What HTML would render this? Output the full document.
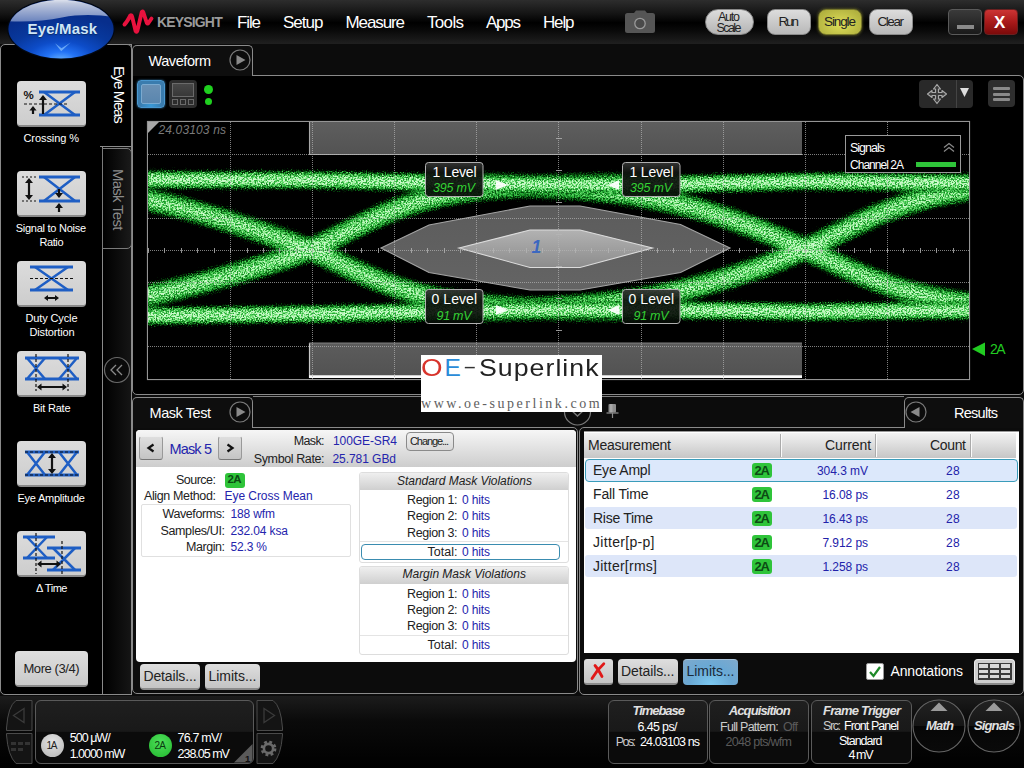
<!DOCTYPE html>
<html><head><meta charset="utf-8"><title>Eye/Mask</title>
<style>
html,body{margin:0;padding:0}
body{width:1024px;height:768px;position:relative;overflow:hidden;background:#0c0c0c;font-family:'Liberation Sans',sans-serif}
.t{position:absolute;white-space:pre;line-height:1;}
.a{position:absolute;box-sizing:border-box}
.btn{position:absolute;box-sizing:border-box;border-radius:4px;background:linear-gradient(#dedede,#c4c4c4);border:1px solid #999;border-top-color:#eee;border-bottom-color:#777}
.ib{position:absolute;box-sizing:border-box;width:69px;height:46px;left:17px;border-radius:4px;background:linear-gradient(#dcdcdc,#cdcdcd);border-bottom:2px solid #8a8a8a}
.badge{position:absolute;box-sizing:border-box;width:20px;height:15px;border-radius:3px;background:#2fc43a}
.row{position:absolute;box-sizing:border-box;left:585px;width:432px;height:22px;border-radius:3px;background:#dde6f9}
.grp{position:absolute;box-sizing:border-box;left:359px;width:210px;border:1px solid #ddd;border-radius:3px;background:#fff}
.gh{position:absolute;box-sizing:border-box;left:0;top:0;width:208px;height:17px;background:linear-gradient(#efefef,#cfcfcf);border-radius:2px 2px 0 0}
.bb{position:absolute;box-sizing:border-box;top:700px;height:64px;border:1px solid #5a5a5a;border-radius:6px;background:linear-gradient(#1f1f1f 0,#191919 49%,#0b0b0b 50%,#0b0b0b 100%)}
</style></head>
<body>
<div class="a" style="left:0;top:0;width:1024px;height:44px;background:linear-gradient(#2d2d2d 0,#151515 30%,#000 52%,#0a0a0a 70%,#202020 100%)"></div>
<div class="a" style="left:0;top:44px;width:103px;height:651px;border:1px solid #8a8a8a;border-radius:5px 0 0 5px;background:#000"></div>
<div class="a" style="left:102px;top:44px;width:30px;height:651px;border:1px solid #8a8a8a;background:linear-gradient(to right,#000,#151515)"></div>
<div class="a" style="left:100px;top:44px;width:32px;height:103px;border:1px solid #8a8a8a;border-left:none;border-radius:0 5px 0 0;background:#000"></div>
<div class="a" style="left:102px;top:148px;width:30px;height:101px;border:1px solid #7a7a7a;border-radius:0 5px 5px 0;background:linear-gradient(to right,#000,#1a1a1a)"></div>
<svg class="a" style="left:102px;top:355px" width="30" height="30"><circle cx="15" cy="15" r="12.5" fill="#0a0a0a" stroke="#6a6a6a" stroke-width="1.2"/><path d="M14,10 L9,15 L14,20 M20,10 L15,15 L20,20" fill="none" stroke="#8a8a8a" stroke-width="1.3"/></svg>
<div class="ib" style="top:81px"><svg width="69" height="46" style="position:absolute;left:0;top:0"><path d="M22,11 H63 M22,34 H63" stroke="#1e5ec4" stroke-width="3" fill="none"/><path d="M27,11 L58,34 M27,34 L58,11" stroke="#1e5ec4" stroke-width="2.5" fill="none"/><path d="M7,23 H52" stroke="#111" stroke-width="1.2" stroke-dasharray="3 2"/><path d="M26,16 V33" stroke="#111" stroke-width="2.2"/><path d="M22,19 L26,14 L30,19 Z" fill="#111"/><path d="M16,27 V33" stroke="#111" stroke-width="2.2"/><path d="M12.4,29.6 L16,25 L19.6,29.6 Z" fill="#111"/></svg></div>
<div class="ib" style="top:171px"><svg width="69" height="46" style="position:absolute;left:0;top:0"><path d="M22,6 H63 M22,30 H63" stroke="#1e5ec4" stroke-width="3" fill="none"/><path d="M27,6 L58,30 M27,30 L58,6" stroke="#1e5ec4" stroke-width="2.5" fill="none"/><path d="M5,6 H20 M5,30 H20" stroke="#111" stroke-width="1.2" stroke-dasharray="2 2"/><path d="M12,9 V27" stroke="#111" stroke-width="2.2"/><path d="M8,12 L12,7 L16,12 Z M8,24 L12,29 L16,24 Z" fill="#111"/><path d="M42,25 V18" stroke="#111" stroke-width="2.2"/><path d="M38,22 L42,27 L46,22 Z" fill="#111"/><path d="M42,34 V41" stroke="#111" stroke-width="2.2"/><path d="M38,37 L42,32 L46,37 Z" fill="#111"/></svg></div>
<div class="ib" style="top:261px"><svg width="69" height="46" style="position:absolute;left:0;top:0"><path d="M13,6 H56 M13,29 H56" stroke="#1e5ec4" stroke-width="3" fill="none"/><path d="M18,6 L51,29 M18,29 L51,6" stroke="#1e5ec4" stroke-width="2.5" fill="none"/><path d="M13,17.5 H57" stroke="#111" stroke-width="1.2" stroke-dasharray="3 2"/><path d="M29,37 H40" stroke="#111" stroke-width="2"/><path d="M31,34 L27,37 L31,40 Z M38,34 L42,37 L38,40 Z" fill="#111"/></svg></div>
<div class="ib" style="top:351px"><svg width="69" height="46" style="position:absolute;left:0;top:0"><path d="M8,7 H62 M8,28 H62" stroke="#1e5ec4" stroke-width="3"/><path d="M10,7 L28,28 M10,28 L28,7 M42,7 L60,28 M42,28 L60,7" stroke="#1e5ec4" stroke-width="2.5" fill="none"/><path d="M19,3 V40 M51,3 V40" stroke="#111" stroke-width="1.2" stroke-dasharray="3 2"/><path d="M22,36 H48" stroke="#111" stroke-width="2"/><path d="M24.5,32.5 L20,36 L24.5,39.5 Z M45.5,32.5 L50,36 L45.5,39.5 Z" fill="#111"/></svg></div>
<div class="ib" style="top:441px"><svg width="69" height="46" style="position:absolute;left:0;top:0"><path d="M8,11 H62 M8,34 H62" stroke="#1e5ec4" stroke-width="3"/><path d="M10,11 L28,34 M10,34 L28,11 M42,11 L60,34 M42,34 L60,11" stroke="#1e5ec4" stroke-width="2.5" fill="none"/><path d="M8,11 H62 M8,34 H62" stroke="#111" stroke-width="1" stroke-dasharray="3 2"/><path d="M35,14 V31" stroke="#111" stroke-width="2.2"/><path d="M31,17 L35,12 L39,17 Z M31,28 L35,33 L39,28 Z" fill="#111"/></svg></div>
<div class="ib" style="top:531px"><svg width="69" height="46" style="position:absolute;left:0;top:0"><path d="M6,6 H38 M6,27 H38 M30,17 H64 M30,39 H64" stroke="#1e5ec4" stroke-width="3"/><path d="M10,6 L30,27 M10,27 L30,6 M36,17 L58,39 M36,39 L58,17" stroke="#1e5ec4" stroke-width="2.5" fill="none"/><path d="M19,2 V43 M45,10 V43" stroke="#111" stroke-width="1.2" stroke-dasharray="3 2"/><path d="M22,33 H42" stroke="#111" stroke-width="2"/><path d="M24.5,29.5 L20,33 L24.5,36.5 Z M39.5,29.5 L44,33 L39.5,36.5 Z" fill="#111"/></svg></div>
<div class="btn" style="left:15px;top:651px;width:73px;height:36px;border-radius:4px;background:linear-gradient(#dedede,#cacaca);border:none;border-bottom:2px solid #8a8a8a"></div>
<svg class="a" style="left:0;top:0" width="130" height="64">
<defs>
<radialGradient id="eg" cx="50%" cy="104%" r="78%"><stop offset="0" stop-color="#6ab4ff"/><stop offset="0.2" stop-color="#2272f6"/><stop offset="0.42" stop-color="#0d4cc8"/><stop offset="0.7" stop-color="#08389c"/><stop offset="1" stop-color="#072e8c"/></radialGradient>
<linearGradient id="eh" x1="0" y1="0" x2="0" y2="1"><stop offset="0" stop-color="#ffffff" stop-opacity="1"/><stop offset="0.3" stop-color="#c4cce0" stop-opacity=".97"/><stop offset="1" stop-color="#7088c0" stop-opacity=".95"/></linearGradient>
<clipPath id="ec"><ellipse cx="61" cy="29" rx="52.4" ry="29.2"/></clipPath>
</defs>
<ellipse cx="61" cy="29" rx="53.8" ry="30.6" fill="#020814"/>
<ellipse cx="61" cy="29" rx="52.6" ry="29.4" fill="url(#eg)"/>
<path d="M5,21 C25,22.5 45,21 62,17.5 C80,14 98,14.5 116,17.5 V-4 H5 Z" fill="url(#eh)" clip-path="url(#ec)"/>
<path d="M55,43.2 L61.2,51.2 L70.6,42.4 L61.5,48.2 Z" fill="#8cc4ff" opacity=".7"/>
</svg>
<svg class="a" style="left:118px;top:4px" width="40" height="36"><path d="M6.5,20.5 Q9,18 12.3,11.5 Q13.5,10.5 14.2,13 L17.6,27 Q18.5,29 19.4,26.5 L23.8,8 Q24.6,6.5 25.4,8.5 L28.8,19 Q29.8,20.5 30.8,18.5 L33.5,14.5" fill="none" stroke="#e8123e" stroke-width="3.9" stroke-linecap="round" stroke-linejoin="round"/></svg>
<svg class="a" style="left:624px;top:9px" width="33" height="26"><path d="M10,4 L12,1.5 H21 L23,4 H28.5 Q31,4 31,6.5 V21.5 Q31,24 28.5,24 H3.5 Q1,24 1,21.5 V6.5 Q1,4 3.5,4 Z" fill="#555"/><circle cx="16" cy="14.5" r="5.2" fill="#4a4a4a" stroke="#9a9a9a" stroke-width="1.3"/></svg>
<div class="a" style="left:705px;top:9px;width:49px;height:26px;border-radius:13px;background:linear-gradient(#dcdcdc,#b4b4b4);border:1px solid #8a8a8a"></div>
<div class="a" style="left:767px;top:9px;width:44px;height:26px;border-radius:8px;background:linear-gradient(#dcdcdc,#b8b8b8);border:1px solid #8a8a8a"></div>
<div class="a" style="left:818px;top:9px;width:44px;height:26px;border-radius:8px;background:radial-gradient(ellipse at 50% 60%,#dede58,#a8a83a);border:1px solid #77772a;box-shadow:0 0 3px #77772a"></div>
<div class="a" style="left:869px;top:9px;width:44px;height:26px;border-radius:8px;background:linear-gradient(#dcdcdc,#b8b8b8);border:1px solid #8a8a8a"></div>
<div class="a" style="left:948px;top:9px;width:34px;height:26px;border-radius:4px;background:linear-gradient(#3a3a3a,#1a1a1a);border:1px solid #5a5a5a"></div>
<div class="a" style="left:957px;top:25px;width:17px;height:4px;background:#8a8a8a"></div>
<div class="a" style="left:984px;top:9px;width:34px;height:26px;border-radius:4px;background:linear-gradient(#cc3434 0,#a81a1a 50%,#7c0a0a 100%);border:1px solid #6a2020"></div>
<div class="a" style="left:132px;top:75px;width:892px;height:320px;border:1px solid #8a8a8a;border-radius:0 5px 5px 5px;background:#000"></div>
<div class="a" style="left:132px;top:45px;width:121px;height:31px;border:1px solid #8a8a8a;border-bottom:none;border-radius:5px 5px 0 0;background:#0e0e0e"></div>
<svg class="a" style="left:228px;top:48px" width="24" height="24"><circle cx="12" cy="12" r="10" fill="#0c0c0c" stroke="#7a7a7a" stroke-width="1.2"/><path d="M-3.5,-5 L5.5,0 L-3.5,5 Z" transform="translate(12,12)" fill="#8a8a8a"/></svg>
<div class="a" style="left:137px;top:80px;width:28px;height:28px;border-radius:4px;background:radial-gradient(ellipse at 50% 100%,#3a9ad8,#3a7cae 60%);border:1px solid #4a98d0;box-shadow:0 0 2px #3a88c0"><div class="a" style="left:3px;top:3px;width:20px;height:20px;border-radius:2px;border:1px solid #7aaad0;background:linear-gradient(#6a90b4,#5a86ae)"></div></div>
<div class="a" style="left:169px;top:80px;width:28px;height:28px;border-radius:4px;background:#2c2c2c"><div class="a" style="left:3px;top:3px;width:22px;height:14px;border:1px solid #6a6a6a;background:linear-gradient(#484848,#383838)"></div><div class="a" style="left:3px;top:19px;width:6px;height:6px;border:1px solid #6a6a6a"></div><div class="a" style="left:11px;top:19px;width:6px;height:6px;border:1px solid #6a6a6a"></div><div class="a" style="left:19px;top:19px;width:6px;height:6px;border:1px solid #6a6a6a"></div></div>
<div class="a" style="left:204px;top:84.5px;width:9px;height:9px;border-radius:50%;background:#1fd01f"></div>
<div class="a" style="left:205px;top:97.5px;width:7px;height:7px;border-radius:50%;background:#1fd01f"></div>
<div class="a" style="left:919px;top:80px;width:54px;height:28px;border-radius:4px;background:#292929"></div><div class="a" style="left:956px;top:80px;width:1px;height:28px;background:#444"></div>
<svg class="a" style="left:926px;top:83px" width="22" height="22"><path d="M11,1.5 L14.5,6 H12.5 V9.5 H16 V7.5 L20.5,11 L16,14.5 V12.5 H12.5 V16 H14.5 L11,20.5 L7.5,16 H9.5 V12.5 H6 V14.5 L1.5,11 L6,7.5 V9.5 H9.5 V6 H7.5 Z" fill="#3a3a3a" stroke="#a8a8a8" stroke-width="1.2" stroke-linejoin="round"/></svg>
<svg class="a" style="left:959px;top:87px" width="11" height="11"><path d="M1,1 H10 L5.5,10 Z" fill="#ddd"/></svg>
<div class="a" style="left:988px;top:80px;width:27px;height:27px;border-radius:4px;background:#2e2e2e"></div>
<div class="a" style="left:993px;top:87px;width:17px;height:3px;border-radius:1px;background:#8a8a8a"></div>
<div class="a" style="left:993px;top:92.5px;width:17px;height:3px;border-radius:1px;background:#8a8a8a"></div>
<div class="a" style="left:993px;top:98px;width:17px;height:3px;border-radius:1px;background:#8a8a8a"></div>
<svg class="a" style="left:133px;top:76px" width="888" height="318" viewBox="133 76 888 318">
<defs>
<clipPath id="pc"><rect x="148" y="122" width="821" height="257"/></clipPath>
<linearGradient id="lb" x1="0" y1="0" x2="0" y2="1"><stop offset="0" stop-color="#363636" stop-opacity=".94"/><stop offset="0.3" stop-color="#101410" stop-opacity=".93"/><stop offset="1" stop-color="#060c06" stop-opacity=".92"/></linearGradient>
<linearGradient id="mb" x1="0" y1="0" x2="0" y2="1"><stop offset="0" stop-color="#626262"/><stop offset="1" stop-color="#565656"/></linearGradient>
<linearGradient id="mb2" x1="0" y1="0" x2="0" y2="1"><stop offset="0" stop-color="#606060"/><stop offset="1" stop-color="#555"/></linearGradient>
<linearGradient id="mo" x1="0" y1="0" x2="0" y2="1"><stop offset="0" stop-color="#5c5c5c"/><stop offset="1" stop-color="#646464"/></linearGradient>
<linearGradient id="mi" x1="0" y1="0" x2="0" y2="1"><stop offset="0" stop-color="#b2b2b2"/><stop offset="1" stop-color="#8c8c8c"/></linearGradient>
<filter id="g1" x="140" y="115" width="840" height="272" filterUnits="userSpaceOnUse" color-interpolation-filters="sRGB">
  <feGaussianBlur in="SourceGraphic" stdDeviation="1.8" result="b"/>
  <feTurbulence type="fractalNoise" baseFrequency="0.62" numOctaves="2" seed="11" result="n"/>
  <feTurbulence type="fractalNoise" baseFrequency="0.8" numOctaves="1" seed="4" result="n2"/>
  <feDisplacementMap in="b" in2="n2" scale="9" xChannelSelector="R" yChannelSelector="G" result="bd"/>
  <feColorMatrix in="n" type="matrix" values="3 0 0 0 -1  3 0 0 0 -1  3 0 0 0 -1  0 0 0 0 1" result="na"/>
  <feComposite in="bd" in2="na" operator="arithmetic" k1="0.95" k2="0.6" k3="0" k4="-0.04" result="c"/>
  <feComponentTransfer in="c"><feFuncR type="table" tableValues="0 0.02 0.13 0.32 0.62 0.8"/><feFuncG type="table" tableValues="0 0.3 0.64 0.82 0.93 0.98"/><feFuncB type="table" tableValues="0 0.05 0.19 0.36 0.62 0.8"/></feComponentTransfer>
</filter>
</defs>
<rect x="147.8" y="121.8" width="821.4" height="257.4" fill="#000" stroke="#949494" stroke-width="1.8"/>
<g clip-path="url(#pc)">
 <g filter="url(#g1)" fill="none" stroke-linejoin="round">
  <rect x="140" y="115" width="840" height="272" fill="#000"/>
  <path d="M-21.0,307.9 L-15.0,307.7 L-9.0,307.4 L-3.0,307.2 L3.0,306.9 L9.0,306.6 L15.0,306.3 L21.0,306.0 L27.0,305.6 L33.0,305.2 L39.0,304.8 L45.0,304.4 L51.0,303.9 L57.0,303.4 L63.0,302.9 L69.0,302.3 L75.0,301.7 L81.0,301.0 L87.0,300.4 L93.0,299.6 L99.0,298.9 L105.0,303.6 L111.0,302.6 L117.0,301.6 L123.0,300.5 L129.0,299.4 L135.0,298.3 L141.0,297.1 L147.0,295.9 L153.0,294.6 L159.0,293.3 L165.0,292.0 L171.0,290.6 L177.0,289.1 L183.0,287.7 L189.0,286.2 L195.0,284.6 L201.0,283.1 L207.0,281.5 L213.0,279.9 L219.0,278.3 L225.0,276.6 L231.0,274.9 L237.0,273.2 L243.0,271.5 L249.0,269.8 L255.0,268.0 L261.0,266.2 L267.0,264.4 L273.0,262.5 L279.0,260.6 L285.0,258.6 L291.0,256.5 L297.0,254.3 L303.0,252.0 L309.0,249.5 L315.0,246.9 L321.0,244.3 L327.0,241.5 L333.0,238.6 L339.0,235.6 L345.0,232.6 L351.0,229.6 L357.0,226.6 L363.0,223.7 L369.0,220.8 L375.0,218.0 L381.0,215.4 L387.0,212.8 L393.0,210.4 L399.0,208.2 L405.0,206.0 L411.0,204.0 L417.0,202.2 L423.0,200.5 L429.0,198.9 L435.0,197.4 L441.0,196.1 L447.0,194.8 L453.0,193.7 L459.0,192.7 L465.0,191.7 L471.0,190.9 L477.0,190.1 L483.0,189.4 L489.0,188.8 L495.0,188.3 L501.0,187.8 L507.0,187.4 L513.0,187.1 L519.0,186.8 L525.0,186.5 L531.0,186.3 L537.0,186.1 L543.0,186.0 L549.0,185.7 L555.0,185.6 L561.0,185.4 L567.0,185.3 L573.0,185.2 L579.0,185.0 L585.0,185.0 L591.0,184.9 L597.0,184.8 L603.0,184.8 L609.0,184.7 L615.0,184.7 L621.0,184.7 L627.0,184.6 L633.0,184.6 L639.0,184.6 M-21.0,185.1 L-15.0,185.3 L-9.0,185.6 L-3.0,185.8 L3.0,186.1 L9.0,186.4 L15.0,186.7 L21.0,187.0 L27.0,187.4 L33.0,187.8 L39.0,188.2 L45.0,188.6 L51.0,189.1 L57.0,189.6 L63.0,190.1 L69.0,190.7 L75.0,191.3 L81.0,192.0 L87.0,192.7 L93.0,193.4 L99.0,194.2 L105.0,192.4 L111.0,193.3 L117.0,194.3 L123.0,195.3 L129.0,196.4 L135.0,197.5 L141.0,198.7 L147.0,199.9 L153.0,201.1 L159.0,202.5 L165.0,203.8 L171.0,205.2 L177.0,206.7 L183.0,208.2 L189.0,209.8 L195.0,211.5 L201.0,213.1 L207.0,214.9 L213.0,216.6 L219.0,218.5 L225.0,220.3 L231.0,222.2 L237.0,224.1 L243.0,226.1 L249.0,228.0 L255.0,230.0 L261.0,232.0 L267.0,234.1 L273.0,236.1 L279.0,238.2 L285.0,240.3 L291.0,242.5 L297.0,244.8 L303.0,247.1 L309.0,249.5 L315.0,252.0 L321.0,254.7 L327.0,257.4 L333.0,260.2 L339.0,263.0 L345.0,265.8 L351.0,268.6 L357.0,271.3 L363.0,274.0 L369.0,276.6 L375.0,279.1 L381.0,281.5 L387.0,283.8 L393.0,285.9 L399.0,288.0 L405.0,289.9 L411.0,291.7 L417.0,293.4 L423.0,294.9 L429.0,296.4 L435.0,297.7 L441.0,299.0 L447.0,300.1 L453.0,301.2 L459.0,302.2 L465.0,303.0 L471.0,303.8 L477.0,304.5 L483.0,305.2 L489.0,305.8 L495.0,306.3 L501.0,306.7 L507.0,307.1 L513.0,307.5 L519.0,307.7 L525.0,308.0 L531.0,308.2 L537.0,308.4 L543.0,308.6 L549.0,308.8 L555.0,308.9 L561.0,309.1 L567.0,309.2 L573.0,309.3 L579.0,309.5 L585.0,309.5 L591.0,309.6 L597.0,309.7 L603.0,309.7 L609.0,309.8 L615.0,309.8 L621.0,309.8 L627.0,309.9 L633.0,309.9 L639.0,309.9 M475.0,310.6 L481.0,310.4 L487.0,310.2 L493.0,310.0 L499.0,309.8 L505.0,309.5 L511.0,309.3 L517.0,309.0 L523.0,308.8 L529.0,308.5 L535.0,308.2 L541.0,307.8 L547.0,307.6 L553.0,307.3 L559.0,306.9 L565.0,306.6 L571.0,306.2 L577.0,305.7 L583.0,305.3 L589.0,304.7 L595.0,304.2 L601.0,303.6 L607.0,302.9 L613.0,302.2 L619.0,301.5 L625.0,300.6 L631.0,299.8 L637.0,298.9 L643.0,297.9 L649.0,296.8 L655.0,295.8 L661.0,294.6 L667.0,293.4 L673.0,292.2 L679.0,290.9 L685.0,289.5 L691.0,288.0 L697.0,286.5 L703.0,285.0 L709.0,283.3 L715.0,281.6 L721.0,279.9 L727.0,278.1 L733.0,276.2 L739.0,274.3 L745.0,272.4 L751.0,270.3 L757.0,268.3 L763.0,266.1 L769.0,264.0 L775.0,261.7 L781.0,259.4 L787.0,257.0 L793.0,254.5 L799.0,251.9 L805.0,249.2 L811.0,246.5 L817.0,243.6 L823.0,240.7 L829.0,237.7 L835.0,234.7 L841.0,231.8 L847.0,228.8 L853.0,225.9 L859.0,223.0 L865.0,220.3 L871.0,217.6 L877.0,215.0 L883.0,212.5 L889.0,210.2 L895.0,207.9 L901.0,205.8 L907.0,203.8 L913.0,201.9 L919.0,200.2 L925.0,198.6 L931.0,197.0 L937.0,195.7 L943.0,194.4 L949.0,193.2 L955.0,192.1 L961.0,191.1 L967.0,190.2 L973.0,189.4 L979.0,188.7 L985.0,188.1 L991.0,187.5 L997.0,187.0 L1003.0,186.5 L1009.0,186.0 L1015.0,185.6 L1021.0,185.3 L1027.0,185.0 L1033.0,184.7 L1039.0,184.5 L1045.0,184.3 L1051.0,184.1 L1057.0,183.9 L1063.0,183.8 L1069.0,183.7 L1075.0,183.6 L1081.0,183.5 L1087.0,183.4 L1093.0,183.3 L1099.0,183.3 L1105.0,183.2 L1111.0,183.2 L1117.0,183.2 L1123.0,183.1 L1129.0,183.1 L1135.0,183.1 M475.0,183.9 L481.0,184.1 L487.0,184.3 L493.0,184.5 L499.0,184.7 L505.0,185.0 L511.0,185.2 L517.0,185.5 L523.0,185.7 L529.0,186.0 L535.0,186.4 L541.0,186.7 L547.0,186.9 L553.0,187.2 L559.0,187.6 L565.0,187.9 L571.0,188.3 L577.0,188.8 L583.0,189.3 L589.0,189.8 L595.0,190.3 L601.0,191.0 L607.0,191.6 L613.0,192.3 L619.0,193.1 L625.0,193.9 L631.0,194.8 L637.0,195.8 L643.0,196.8 L649.0,197.9 L655.0,199.0 L661.0,200.2 L667.0,201.4 L673.0,202.7 L679.0,204.1 L685.0,205.6 L691.0,207.1 L697.0,208.7 L703.0,210.5 L709.0,212.2 L715.0,214.1 L721.0,216.1 L727.0,218.1 L733.0,220.1 L739.0,222.3 L745.0,224.5 L751.0,226.7 L757.0,229.0 L763.0,231.4 L769.0,233.8 L775.0,236.2 L781.0,238.7 L787.0,241.3 L793.0,243.9 L799.0,246.5 L805.0,249.2 L811.0,252.0 L817.0,254.8 L823.0,257.6 L829.0,260.4 L835.0,263.2 L841.0,265.9 L847.0,268.6 L853.0,271.3 L859.0,273.8 L865.0,276.3 L871.0,278.7 L877.0,281.0 L883.0,283.1 L889.0,285.2 L895.0,287.2 L901.0,289.1 L907.0,290.8 L913.0,292.5 L919.0,294.0 L925.0,295.5 L931.0,296.8 L937.0,298.1 L943.0,299.3 L949.0,300.3 L955.0,301.3 L961.0,302.2 L967.0,303.0 L973.0,303.8 L979.0,304.5 L985.0,305.1 L991.0,305.6 L997.0,306.1 L1003.0,306.6 L1009.0,307.0 L1015.0,307.4 L1021.0,307.7 L1027.0,308.0 L1033.0,308.3 L1039.0,308.5 L1045.0,308.7 L1051.0,308.9 L1057.0,309.1 L1063.0,309.2 L1069.0,309.3 L1075.0,309.4 L1081.0,309.5 L1087.0,309.6 L1093.0,309.7 L1099.0,309.7 L1105.0,309.8 L1111.0,309.8 L1117.0,309.8 L1123.0,309.9 L1129.0,309.9 L1135.0,309.9" stroke="#3a3a3a" stroke-width="24"/>
  <path d="M-21.0,307.9 L-15.0,307.7 L-9.0,307.4 L-3.0,307.2 L3.0,306.9 L9.0,306.6 L15.0,306.3 L21.0,306.0 L27.0,305.6 L33.0,305.2 L39.0,304.8 L45.0,304.4 L51.0,303.9 L57.0,303.4 L63.0,302.9 L69.0,302.3 L75.0,301.7 L81.0,301.0 L87.0,300.4 L93.0,299.6 L99.0,298.9 L105.0,303.6 L111.0,302.6 L117.0,301.6 L123.0,300.5 L129.0,299.4 L135.0,298.3 L141.0,297.1 L147.0,295.9 L153.0,294.6 L159.0,293.3 L165.0,292.0 L171.0,290.6 L177.0,289.1 L183.0,287.7 L189.0,286.2 L195.0,284.6 L201.0,283.1 L207.0,281.5 L213.0,279.9 L219.0,278.3 L225.0,276.6 L231.0,274.9 L237.0,273.2 L243.0,271.5 L249.0,269.8 L255.0,268.0 L261.0,266.2 L267.0,264.4 L273.0,262.5 L279.0,260.6 L285.0,258.6 L291.0,256.5 L297.0,254.3 L303.0,252.0 L309.0,249.5 L315.0,246.9 L321.0,244.3 L327.0,241.5 L333.0,238.6 L339.0,235.6 L345.0,232.6 L351.0,229.6 L357.0,226.6 L363.0,223.7 L369.0,220.8 L375.0,218.0 L381.0,215.4 L387.0,212.8 L393.0,210.4 L399.0,208.2 L405.0,206.0 L411.0,204.0 L417.0,202.2 L423.0,200.5 L429.0,198.9 L435.0,197.4 L441.0,196.1 L447.0,194.8 L453.0,193.7 L459.0,192.7 L465.0,191.7 L471.0,190.9 L477.0,190.1 L483.0,189.4 L489.0,188.8 L495.0,188.3 L501.0,187.8 L507.0,187.4 L513.0,187.1 L519.0,186.8 L525.0,186.5 L531.0,186.3 L537.0,186.1 L543.0,186.0 L549.0,185.7 L555.0,185.6 L561.0,185.4 L567.0,185.3 L573.0,185.2 L579.0,185.0 L585.0,185.0 L591.0,184.9 L597.0,184.8 L603.0,184.8 L609.0,184.7 L615.0,184.7 L621.0,184.7 L627.0,184.6 L633.0,184.6 L639.0,184.6 M-21.0,185.1 L-15.0,185.3 L-9.0,185.6 L-3.0,185.8 L3.0,186.1 L9.0,186.4 L15.0,186.7 L21.0,187.0 L27.0,187.4 L33.0,187.8 L39.0,188.2 L45.0,188.6 L51.0,189.1 L57.0,189.6 L63.0,190.1 L69.0,190.7 L75.0,191.3 L81.0,192.0 L87.0,192.7 L93.0,193.4 L99.0,194.2 L105.0,192.4 L111.0,193.3 L117.0,194.3 L123.0,195.3 L129.0,196.4 L135.0,197.5 L141.0,198.7 L147.0,199.9 L153.0,201.1 L159.0,202.5 L165.0,203.8 L171.0,205.2 L177.0,206.7 L183.0,208.2 L189.0,209.8 L195.0,211.5 L201.0,213.1 L207.0,214.9 L213.0,216.6 L219.0,218.5 L225.0,220.3 L231.0,222.2 L237.0,224.1 L243.0,226.1 L249.0,228.0 L255.0,230.0 L261.0,232.0 L267.0,234.1 L273.0,236.1 L279.0,238.2 L285.0,240.3 L291.0,242.5 L297.0,244.8 L303.0,247.1 L309.0,249.5 L315.0,252.0 L321.0,254.7 L327.0,257.4 L333.0,260.2 L339.0,263.0 L345.0,265.8 L351.0,268.6 L357.0,271.3 L363.0,274.0 L369.0,276.6 L375.0,279.1 L381.0,281.5 L387.0,283.8 L393.0,285.9 L399.0,288.0 L405.0,289.9 L411.0,291.7 L417.0,293.4 L423.0,294.9 L429.0,296.4 L435.0,297.7 L441.0,299.0 L447.0,300.1 L453.0,301.2 L459.0,302.2 L465.0,303.0 L471.0,303.8 L477.0,304.5 L483.0,305.2 L489.0,305.8 L495.0,306.3 L501.0,306.7 L507.0,307.1 L513.0,307.5 L519.0,307.7 L525.0,308.0 L531.0,308.2 L537.0,308.4 L543.0,308.6 L549.0,308.8 L555.0,308.9 L561.0,309.1 L567.0,309.2 L573.0,309.3 L579.0,309.5 L585.0,309.5 L591.0,309.6 L597.0,309.7 L603.0,309.7 L609.0,309.8 L615.0,309.8 L621.0,309.8 L627.0,309.9 L633.0,309.9 L639.0,309.9 M475.0,310.6 L481.0,310.4 L487.0,310.2 L493.0,310.0 L499.0,309.8 L505.0,309.5 L511.0,309.3 L517.0,309.0 L523.0,308.8 L529.0,308.5 L535.0,308.2 L541.0,307.8 L547.0,307.6 L553.0,307.3 L559.0,306.9 L565.0,306.6 L571.0,306.2 L577.0,305.7 L583.0,305.3 L589.0,304.7 L595.0,304.2 L601.0,303.6 L607.0,302.9 L613.0,302.2 L619.0,301.5 L625.0,300.6 L631.0,299.8 L637.0,298.9 L643.0,297.9 L649.0,296.8 L655.0,295.8 L661.0,294.6 L667.0,293.4 L673.0,292.2 L679.0,290.9 L685.0,289.5 L691.0,288.0 L697.0,286.5 L703.0,285.0 L709.0,283.3 L715.0,281.6 L721.0,279.9 L727.0,278.1 L733.0,276.2 L739.0,274.3 L745.0,272.4 L751.0,270.3 L757.0,268.3 L763.0,266.1 L769.0,264.0 L775.0,261.7 L781.0,259.4 L787.0,257.0 L793.0,254.5 L799.0,251.9 L805.0,249.2 L811.0,246.5 L817.0,243.6 L823.0,240.7 L829.0,237.7 L835.0,234.7 L841.0,231.8 L847.0,228.8 L853.0,225.9 L859.0,223.0 L865.0,220.3 L871.0,217.6 L877.0,215.0 L883.0,212.5 L889.0,210.2 L895.0,207.9 L901.0,205.8 L907.0,203.8 L913.0,201.9 L919.0,200.2 L925.0,198.6 L931.0,197.0 L937.0,195.7 L943.0,194.4 L949.0,193.2 L955.0,192.1 L961.0,191.1 L967.0,190.2 L973.0,189.4 L979.0,188.7 L985.0,188.1 L991.0,187.5 L997.0,187.0 L1003.0,186.5 L1009.0,186.0 L1015.0,185.6 L1021.0,185.3 L1027.0,185.0 L1033.0,184.7 L1039.0,184.5 L1045.0,184.3 L1051.0,184.1 L1057.0,183.9 L1063.0,183.8 L1069.0,183.7 L1075.0,183.6 L1081.0,183.5 L1087.0,183.4 L1093.0,183.3 L1099.0,183.3 L1105.0,183.2 L1111.0,183.2 L1117.0,183.2 L1123.0,183.1 L1129.0,183.1 L1135.0,183.1 M475.0,183.9 L481.0,184.1 L487.0,184.3 L493.0,184.5 L499.0,184.7 L505.0,185.0 L511.0,185.2 L517.0,185.5 L523.0,185.7 L529.0,186.0 L535.0,186.4 L541.0,186.7 L547.0,186.9 L553.0,187.2 L559.0,187.6 L565.0,187.9 L571.0,188.3 L577.0,188.8 L583.0,189.3 L589.0,189.8 L595.0,190.3 L601.0,191.0 L607.0,191.6 L613.0,192.3 L619.0,193.1 L625.0,193.9 L631.0,194.8 L637.0,195.8 L643.0,196.8 L649.0,197.9 L655.0,199.0 L661.0,200.2 L667.0,201.4 L673.0,202.7 L679.0,204.1 L685.0,205.6 L691.0,207.1 L697.0,208.7 L703.0,210.5 L709.0,212.2 L715.0,214.1 L721.0,216.1 L727.0,218.1 L733.0,220.1 L739.0,222.3 L745.0,224.5 L751.0,226.7 L757.0,229.0 L763.0,231.4 L769.0,233.8 L775.0,236.2 L781.0,238.7 L787.0,241.3 L793.0,243.9 L799.0,246.5 L805.0,249.2 L811.0,252.0 L817.0,254.8 L823.0,257.6 L829.0,260.4 L835.0,263.2 L841.0,265.9 L847.0,268.6 L853.0,271.3 L859.0,273.8 L865.0,276.3 L871.0,278.7 L877.0,281.0 L883.0,283.1 L889.0,285.2 L895.0,287.2 L901.0,289.1 L907.0,290.8 L913.0,292.5 L919.0,294.0 L925.0,295.5 L931.0,296.8 L937.0,298.1 L943.0,299.3 L949.0,300.3 L955.0,301.3 L961.0,302.2 L967.0,303.0 L973.0,303.8 L979.0,304.5 L985.0,305.1 L991.0,305.6 L997.0,306.1 L1003.0,306.6 L1009.0,307.0 L1015.0,307.4 L1021.0,307.7 L1027.0,308.0 L1033.0,308.3 L1039.0,308.5 L1045.0,308.7 L1051.0,308.9 L1057.0,309.1 L1063.0,309.2 L1069.0,309.3 L1075.0,309.4 L1081.0,309.5 L1087.0,309.6 L1093.0,309.7 L1099.0,309.7 L1105.0,309.8 L1111.0,309.8 L1117.0,309.8 L1123.0,309.9 L1129.0,309.9 L1135.0,309.9" stroke="#6e6e6e" stroke-width="18.5"/>
  <path d="M-21.0,307.9 L-15.0,307.7 L-9.0,307.4 L-3.0,307.2 L3.0,306.9 L9.0,306.6 L15.0,306.3 L21.0,306.0 L27.0,305.6 L33.0,305.2 L39.0,304.8 L45.0,304.4 L51.0,303.9 L57.0,303.4 L63.0,302.9 L69.0,302.3 L75.0,301.7 L81.0,301.0 L87.0,300.4 L93.0,299.6 L99.0,298.9 L105.0,303.6 L111.0,302.6 L117.0,301.6 L123.0,300.5 L129.0,299.4 L135.0,298.3 L141.0,297.1 L147.0,295.9 L153.0,294.6 L159.0,293.3 L165.0,292.0 L171.0,290.6 L177.0,289.1 L183.0,287.7 L189.0,286.2 L195.0,284.6 L201.0,283.1 L207.0,281.5 L213.0,279.9 L219.0,278.3 L225.0,276.6 L231.0,274.9 L237.0,273.2 L243.0,271.5 L249.0,269.8 L255.0,268.0 L261.0,266.2 L267.0,264.4 L273.0,262.5 L279.0,260.6 L285.0,258.6 L291.0,256.5 L297.0,254.3 L303.0,252.0 L309.0,249.5 L315.0,246.9 L321.0,244.3 L327.0,241.5 L333.0,238.6 L339.0,235.6 L345.0,232.6 L351.0,229.6 L357.0,226.6 L363.0,223.7 L369.0,220.8 L375.0,218.0 L381.0,215.4 L387.0,212.8 L393.0,210.4 L399.0,208.2 L405.0,206.0 L411.0,204.0 L417.0,202.2 L423.0,200.5 L429.0,198.9 L435.0,197.4 L441.0,196.1 L447.0,194.8 L453.0,193.7 L459.0,192.7 L465.0,191.7 L471.0,190.9 L477.0,190.1 L483.0,189.4 L489.0,188.8 L495.0,188.3 L501.0,187.8 L507.0,187.4 L513.0,187.1 L519.0,186.8 L525.0,186.5 L531.0,186.3 L537.0,186.1 L543.0,186.0 L549.0,185.7 L555.0,185.6 L561.0,185.4 L567.0,185.3 L573.0,185.2 L579.0,185.0 L585.0,185.0 L591.0,184.9 L597.0,184.8 L603.0,184.8 L609.0,184.7 L615.0,184.7 L621.0,184.7 L627.0,184.6 L633.0,184.6 L639.0,184.6 M-21.0,185.1 L-15.0,185.3 L-9.0,185.6 L-3.0,185.8 L3.0,186.1 L9.0,186.4 L15.0,186.7 L21.0,187.0 L27.0,187.4 L33.0,187.8 L39.0,188.2 L45.0,188.6 L51.0,189.1 L57.0,189.6 L63.0,190.1 L69.0,190.7 L75.0,191.3 L81.0,192.0 L87.0,192.7 L93.0,193.4 L99.0,194.2 L105.0,192.4 L111.0,193.3 L117.0,194.3 L123.0,195.3 L129.0,196.4 L135.0,197.5 L141.0,198.7 L147.0,199.9 L153.0,201.1 L159.0,202.5 L165.0,203.8 L171.0,205.2 L177.0,206.7 L183.0,208.2 L189.0,209.8 L195.0,211.5 L201.0,213.1 L207.0,214.9 L213.0,216.6 L219.0,218.5 L225.0,220.3 L231.0,222.2 L237.0,224.1 L243.0,226.1 L249.0,228.0 L255.0,230.0 L261.0,232.0 L267.0,234.1 L273.0,236.1 L279.0,238.2 L285.0,240.3 L291.0,242.5 L297.0,244.8 L303.0,247.1 L309.0,249.5 L315.0,252.0 L321.0,254.7 L327.0,257.4 L333.0,260.2 L339.0,263.0 L345.0,265.8 L351.0,268.6 L357.0,271.3 L363.0,274.0 L369.0,276.6 L375.0,279.1 L381.0,281.5 L387.0,283.8 L393.0,285.9 L399.0,288.0 L405.0,289.9 L411.0,291.7 L417.0,293.4 L423.0,294.9 L429.0,296.4 L435.0,297.7 L441.0,299.0 L447.0,300.1 L453.0,301.2 L459.0,302.2 L465.0,303.0 L471.0,303.8 L477.0,304.5 L483.0,305.2 L489.0,305.8 L495.0,306.3 L501.0,306.7 L507.0,307.1 L513.0,307.5 L519.0,307.7 L525.0,308.0 L531.0,308.2 L537.0,308.4 L543.0,308.6 L549.0,308.8 L555.0,308.9 L561.0,309.1 L567.0,309.2 L573.0,309.3 L579.0,309.5 L585.0,309.5 L591.0,309.6 L597.0,309.7 L603.0,309.7 L609.0,309.8 L615.0,309.8 L621.0,309.8 L627.0,309.9 L633.0,309.9 L639.0,309.9 M475.0,310.6 L481.0,310.4 L487.0,310.2 L493.0,310.0 L499.0,309.8 L505.0,309.5 L511.0,309.3 L517.0,309.0 L523.0,308.8 L529.0,308.5 L535.0,308.2 L541.0,307.8 L547.0,307.6 L553.0,307.3 L559.0,306.9 L565.0,306.6 L571.0,306.2 L577.0,305.7 L583.0,305.3 L589.0,304.7 L595.0,304.2 L601.0,303.6 L607.0,302.9 L613.0,302.2 L619.0,301.5 L625.0,300.6 L631.0,299.8 L637.0,298.9 L643.0,297.9 L649.0,296.8 L655.0,295.8 L661.0,294.6 L667.0,293.4 L673.0,292.2 L679.0,290.9 L685.0,289.5 L691.0,288.0 L697.0,286.5 L703.0,285.0 L709.0,283.3 L715.0,281.6 L721.0,279.9 L727.0,278.1 L733.0,276.2 L739.0,274.3 L745.0,272.4 L751.0,270.3 L757.0,268.3 L763.0,266.1 L769.0,264.0 L775.0,261.7 L781.0,259.4 L787.0,257.0 L793.0,254.5 L799.0,251.9 L805.0,249.2 L811.0,246.5 L817.0,243.6 L823.0,240.7 L829.0,237.7 L835.0,234.7 L841.0,231.8 L847.0,228.8 L853.0,225.9 L859.0,223.0 L865.0,220.3 L871.0,217.6 L877.0,215.0 L883.0,212.5 L889.0,210.2 L895.0,207.9 L901.0,205.8 L907.0,203.8 L913.0,201.9 L919.0,200.2 L925.0,198.6 L931.0,197.0 L937.0,195.7 L943.0,194.4 L949.0,193.2 L955.0,192.1 L961.0,191.1 L967.0,190.2 L973.0,189.4 L979.0,188.7 L985.0,188.1 L991.0,187.5 L997.0,187.0 L1003.0,186.5 L1009.0,186.0 L1015.0,185.6 L1021.0,185.3 L1027.0,185.0 L1033.0,184.7 L1039.0,184.5 L1045.0,184.3 L1051.0,184.1 L1057.0,183.9 L1063.0,183.8 L1069.0,183.7 L1075.0,183.6 L1081.0,183.5 L1087.0,183.4 L1093.0,183.3 L1099.0,183.3 L1105.0,183.2 L1111.0,183.2 L1117.0,183.2 L1123.0,183.1 L1129.0,183.1 L1135.0,183.1 M475.0,183.9 L481.0,184.1 L487.0,184.3 L493.0,184.5 L499.0,184.7 L505.0,185.0 L511.0,185.2 L517.0,185.5 L523.0,185.7 L529.0,186.0 L535.0,186.4 L541.0,186.7 L547.0,186.9 L553.0,187.2 L559.0,187.6 L565.0,187.9 L571.0,188.3 L577.0,188.8 L583.0,189.3 L589.0,189.8 L595.0,190.3 L601.0,191.0 L607.0,191.6 L613.0,192.3 L619.0,193.1 L625.0,193.9 L631.0,194.8 L637.0,195.8 L643.0,196.8 L649.0,197.9 L655.0,199.0 L661.0,200.2 L667.0,201.4 L673.0,202.7 L679.0,204.1 L685.0,205.6 L691.0,207.1 L697.0,208.7 L703.0,210.5 L709.0,212.2 L715.0,214.1 L721.0,216.1 L727.0,218.1 L733.0,220.1 L739.0,222.3 L745.0,224.5 L751.0,226.7 L757.0,229.0 L763.0,231.4 L769.0,233.8 L775.0,236.2 L781.0,238.7 L787.0,241.3 L793.0,243.9 L799.0,246.5 L805.0,249.2 L811.0,252.0 L817.0,254.8 L823.0,257.6 L829.0,260.4 L835.0,263.2 L841.0,265.9 L847.0,268.6 L853.0,271.3 L859.0,273.8 L865.0,276.3 L871.0,278.7 L877.0,281.0 L883.0,283.1 L889.0,285.2 L895.0,287.2 L901.0,289.1 L907.0,290.8 L913.0,292.5 L919.0,294.0 L925.0,295.5 L931.0,296.8 L937.0,298.1 L943.0,299.3 L949.0,300.3 L955.0,301.3 L961.0,302.2 L967.0,303.0 L973.0,303.8 L979.0,304.5 L985.0,305.1 L991.0,305.6 L997.0,306.1 L1003.0,306.6 L1009.0,307.0 L1015.0,307.4 L1021.0,307.7 L1027.0,308.0 L1033.0,308.3 L1039.0,308.5 L1045.0,308.7 L1051.0,308.9 L1057.0,309.1 L1063.0,309.2 L1069.0,309.3 L1075.0,309.4 L1081.0,309.5 L1087.0,309.6 L1093.0,309.7 L1099.0,309.7 L1105.0,309.8 L1111.0,309.8 L1117.0,309.8 L1123.0,309.9 L1129.0,309.9 L1135.0,309.9" stroke="#989898" stroke-width="12.5"/>
  <path d="M-21.0,307.9 L-15.0,307.7 L-9.0,307.4 L-3.0,307.2 L3.0,306.9 L9.0,306.6 L15.0,306.3 L21.0,306.0 L27.0,305.6 L33.0,305.2 L39.0,304.8 L45.0,304.4 L51.0,303.9 L57.0,303.4 L63.0,302.9 L69.0,302.3 L75.0,301.7 L81.0,301.0 L87.0,300.4 L93.0,299.6 L99.0,298.9 L105.0,303.6 L111.0,302.6 L117.0,301.6 L123.0,300.5 L129.0,299.4 L135.0,298.3 L141.0,297.1 L147.0,295.9 L153.0,294.6 L159.0,293.3 L165.0,292.0 L171.0,290.6 L177.0,289.1 L183.0,287.7 L189.0,286.2 L195.0,284.6 L201.0,283.1 L207.0,281.5 L213.0,279.9 L219.0,278.3 L225.0,276.6 L231.0,274.9 L237.0,273.2 L243.0,271.5 L249.0,269.8 L255.0,268.0 L261.0,266.2 L267.0,264.4 L273.0,262.5 L279.0,260.6 L285.0,258.6 L291.0,256.5 L297.0,254.3 L303.0,252.0 L309.0,249.5 L315.0,246.9 L321.0,244.3 L327.0,241.5 L333.0,238.6 L339.0,235.6 L345.0,232.6 L351.0,229.6 L357.0,226.6 L363.0,223.7 L369.0,220.8 L375.0,218.0 L381.0,215.4 L387.0,212.8 L393.0,210.4 L399.0,208.2 L405.0,206.0 L411.0,204.0 L417.0,202.2 L423.0,200.5 L429.0,198.9 L435.0,197.4 L441.0,196.1 L447.0,194.8 L453.0,193.7 L459.0,192.7 L465.0,191.7 L471.0,190.9 L477.0,190.1 L483.0,189.4 L489.0,188.8 L495.0,188.3 L501.0,187.8 L507.0,187.4 L513.0,187.1 L519.0,186.8 L525.0,186.5 L531.0,186.3 L537.0,186.1 L543.0,186.0 L549.0,185.7 L555.0,185.6 L561.0,185.4 L567.0,185.3 L573.0,185.2 L579.0,185.0 L585.0,185.0 L591.0,184.9 L597.0,184.8 L603.0,184.8 L609.0,184.7 L615.0,184.7 L621.0,184.7 L627.0,184.6 L633.0,184.6 L639.0,184.6 M-21.0,185.1 L-15.0,185.3 L-9.0,185.6 L-3.0,185.8 L3.0,186.1 L9.0,186.4 L15.0,186.7 L21.0,187.0 L27.0,187.4 L33.0,187.8 L39.0,188.2 L45.0,188.6 L51.0,189.1 L57.0,189.6 L63.0,190.1 L69.0,190.7 L75.0,191.3 L81.0,192.0 L87.0,192.7 L93.0,193.4 L99.0,194.2 L105.0,192.4 L111.0,193.3 L117.0,194.3 L123.0,195.3 L129.0,196.4 L135.0,197.5 L141.0,198.7 L147.0,199.9 L153.0,201.1 L159.0,202.5 L165.0,203.8 L171.0,205.2 L177.0,206.7 L183.0,208.2 L189.0,209.8 L195.0,211.5 L201.0,213.1 L207.0,214.9 L213.0,216.6 L219.0,218.5 L225.0,220.3 L231.0,222.2 L237.0,224.1 L243.0,226.1 L249.0,228.0 L255.0,230.0 L261.0,232.0 L267.0,234.1 L273.0,236.1 L279.0,238.2 L285.0,240.3 L291.0,242.5 L297.0,244.8 L303.0,247.1 L309.0,249.5 L315.0,252.0 L321.0,254.7 L327.0,257.4 L333.0,260.2 L339.0,263.0 L345.0,265.8 L351.0,268.6 L357.0,271.3 L363.0,274.0 L369.0,276.6 L375.0,279.1 L381.0,281.5 L387.0,283.8 L393.0,285.9 L399.0,288.0 L405.0,289.9 L411.0,291.7 L417.0,293.4 L423.0,294.9 L429.0,296.4 L435.0,297.7 L441.0,299.0 L447.0,300.1 L453.0,301.2 L459.0,302.2 L465.0,303.0 L471.0,303.8 L477.0,304.5 L483.0,305.2 L489.0,305.8 L495.0,306.3 L501.0,306.7 L507.0,307.1 L513.0,307.5 L519.0,307.7 L525.0,308.0 L531.0,308.2 L537.0,308.4 L543.0,308.6 L549.0,308.8 L555.0,308.9 L561.0,309.1 L567.0,309.2 L573.0,309.3 L579.0,309.5 L585.0,309.5 L591.0,309.6 L597.0,309.7 L603.0,309.7 L609.0,309.8 L615.0,309.8 L621.0,309.8 L627.0,309.9 L633.0,309.9 L639.0,309.9 M475.0,310.6 L481.0,310.4 L487.0,310.2 L493.0,310.0 L499.0,309.8 L505.0,309.5 L511.0,309.3 L517.0,309.0 L523.0,308.8 L529.0,308.5 L535.0,308.2 L541.0,307.8 L547.0,307.6 L553.0,307.3 L559.0,306.9 L565.0,306.6 L571.0,306.2 L577.0,305.7 L583.0,305.3 L589.0,304.7 L595.0,304.2 L601.0,303.6 L607.0,302.9 L613.0,302.2 L619.0,301.5 L625.0,300.6 L631.0,299.8 L637.0,298.9 L643.0,297.9 L649.0,296.8 L655.0,295.8 L661.0,294.6 L667.0,293.4 L673.0,292.2 L679.0,290.9 L685.0,289.5 L691.0,288.0 L697.0,286.5 L703.0,285.0 L709.0,283.3 L715.0,281.6 L721.0,279.9 L727.0,278.1 L733.0,276.2 L739.0,274.3 L745.0,272.4 L751.0,270.3 L757.0,268.3 L763.0,266.1 L769.0,264.0 L775.0,261.7 L781.0,259.4 L787.0,257.0 L793.0,254.5 L799.0,251.9 L805.0,249.2 L811.0,246.5 L817.0,243.6 L823.0,240.7 L829.0,237.7 L835.0,234.7 L841.0,231.8 L847.0,228.8 L853.0,225.9 L859.0,223.0 L865.0,220.3 L871.0,217.6 L877.0,215.0 L883.0,212.5 L889.0,210.2 L895.0,207.9 L901.0,205.8 L907.0,203.8 L913.0,201.9 L919.0,200.2 L925.0,198.6 L931.0,197.0 L937.0,195.7 L943.0,194.4 L949.0,193.2 L955.0,192.1 L961.0,191.1 L967.0,190.2 L973.0,189.4 L979.0,188.7 L985.0,188.1 L991.0,187.5 L997.0,187.0 L1003.0,186.5 L1009.0,186.0 L1015.0,185.6 L1021.0,185.3 L1027.0,185.0 L1033.0,184.7 L1039.0,184.5 L1045.0,184.3 L1051.0,184.1 L1057.0,183.9 L1063.0,183.8 L1069.0,183.7 L1075.0,183.6 L1081.0,183.5 L1087.0,183.4 L1093.0,183.3 L1099.0,183.3 L1105.0,183.2 L1111.0,183.2 L1117.0,183.2 L1123.0,183.1 L1129.0,183.1 L1135.0,183.1 M475.0,183.9 L481.0,184.1 L487.0,184.3 L493.0,184.5 L499.0,184.7 L505.0,185.0 L511.0,185.2 L517.0,185.5 L523.0,185.7 L529.0,186.0 L535.0,186.4 L541.0,186.7 L547.0,186.9 L553.0,187.2 L559.0,187.6 L565.0,187.9 L571.0,188.3 L577.0,188.8 L583.0,189.3 L589.0,189.8 L595.0,190.3 L601.0,191.0 L607.0,191.6 L613.0,192.3 L619.0,193.1 L625.0,193.9 L631.0,194.8 L637.0,195.8 L643.0,196.8 L649.0,197.9 L655.0,199.0 L661.0,200.2 L667.0,201.4 L673.0,202.7 L679.0,204.1 L685.0,205.6 L691.0,207.1 L697.0,208.7 L703.0,210.5 L709.0,212.2 L715.0,214.1 L721.0,216.1 L727.0,218.1 L733.0,220.1 L739.0,222.3 L745.0,224.5 L751.0,226.7 L757.0,229.0 L763.0,231.4 L769.0,233.8 L775.0,236.2 L781.0,238.7 L787.0,241.3 L793.0,243.9 L799.0,246.5 L805.0,249.2 L811.0,252.0 L817.0,254.8 L823.0,257.6 L829.0,260.4 L835.0,263.2 L841.0,265.9 L847.0,268.6 L853.0,271.3 L859.0,273.8 L865.0,276.3 L871.0,278.7 L877.0,281.0 L883.0,283.1 L889.0,285.2 L895.0,287.2 L901.0,289.1 L907.0,290.8 L913.0,292.5 L919.0,294.0 L925.0,295.5 L931.0,296.8 L937.0,298.1 L943.0,299.3 L949.0,300.3 L955.0,301.3 L961.0,302.2 L967.0,303.0 L973.0,303.8 L979.0,304.5 L985.0,305.1 L991.0,305.6 L997.0,306.1 L1003.0,306.6 L1009.0,307.0 L1015.0,307.4 L1021.0,307.7 L1027.0,308.0 L1033.0,308.3 L1039.0,308.5 L1045.0,308.7 L1051.0,308.9 L1057.0,309.1 L1063.0,309.2 L1069.0,309.3 L1075.0,309.4 L1081.0,309.5 L1087.0,309.6 L1093.0,309.7 L1099.0,309.7 L1105.0,309.8 L1111.0,309.8 L1117.0,309.8 L1123.0,309.9 L1129.0,309.9 L1135.0,309.9" stroke="#b4b4b4" stroke-width="6"/>
  <path d="M100.0,179.5 L110.0,179.5 L120.0,179.5 L130.0,179.6 L140.0,179.6 L150.0,179.6 L160.0,179.6 L170.0,179.7 L180.0,179.7 L190.0,179.7 L200.0,179.7 L210.0,179.8 L220.0,179.8 L230.0,179.8 L240.0,179.8 L250.0,179.9 L260.0,179.9 L270.0,179.9 L280.0,179.9 L290.0,179.9 L300.0,180.0 L310.0,180.0 L320.0,180.2 L330.0,180.4 L340.0,180.6 L350.0,180.8 L360.0,181.0 L370.0,181.3 L380.0,181.5 L390.0,181.7 L400.0,181.9 L410.0,182.1 L420.0,182.3 L430.0,182.6 L440.0,182.8 L450.0,183.0 L460.0,183.2 L470.0,183.3 L480.0,183.5 L490.0,183.7 L500.0,183.8 L510.0,184.0 L520.0,184.2 L530.0,184.3 L540.0,184.5 L550.0,184.5 L560.0,184.5 L570.0,184.5 L580.0,184.5 L590.0,184.5 L600.0,184.5 L610.0,184.5 L620.0,184.5 L630.0,184.5 L640.0,184.5 L650.0,184.5 L660.0,184.3 L670.0,184.1 L680.0,184.0 L690.0,183.8 L700.0,183.6 L710.0,183.4 L720.0,183.2 L730.0,183.0 L740.0,182.9 L750.0,182.7 L760.0,182.5 L770.0,182.3 L780.0,182.1 L790.0,181.8 L800.0,181.6 L810.0,181.5 L820.0,181.6 L830.0,181.7 L840.0,181.8 L850.0,181.8 L860.0,181.9 L870.0,182.0 L880.0,182.1 L890.0,182.2 L900.0,182.2 L910.0,182.3 L920.0,182.4 L930.0,182.5 L940.0,182.5 L950.0,182.6 L960.0,182.7 L970.0,182.8 L980.0,182.8 L990.0,182.9 L1000.0,183.0 M100.0,316.5 L110.0,316.4 L120.0,316.3 L130.0,316.1 L140.0,316.0 L150.0,315.9 L160.0,315.8 L170.0,315.7 L180.0,315.6 L190.0,315.4 L200.0,315.3 L210.0,315.2 L220.0,315.1 L230.0,315.0 L240.0,314.8 L250.0,314.7 L260.0,314.6 L270.0,314.5 L280.0,314.4 L290.0,314.3 L300.0,314.1 L310.0,314.0 L320.0,313.9 L330.0,313.7 L340.0,313.5 L350.0,313.3 L360.0,313.1 L370.0,312.9 L380.0,312.8 L390.0,312.6 L400.0,312.4 L410.0,312.2 L420.0,312.0 L430.0,311.9 L440.0,311.7 L450.0,311.5 L460.0,311.3 L470.0,311.2 L480.0,311.0 L490.0,310.8 L500.0,310.7 L510.0,310.5 L520.0,310.3 L530.0,310.2 L540.0,310.0 L550.0,310.0 L560.0,310.0 L570.0,310.0 L580.0,310.0 L590.0,310.0 L600.0,310.0 L610.0,310.0 L620.0,310.0 L630.0,310.0 L640.0,310.0 L650.0,310.0 L660.0,310.1 L670.0,310.2 L680.0,310.3 L690.0,310.4 L700.0,310.5 L710.0,310.5 L720.0,310.6 L730.0,310.7 L740.0,310.8 L750.0,310.9 L760.0,311.0 L770.0,311.2 L780.0,311.4 L790.0,311.7 L800.0,311.9 L810.0,311.9 L820.0,311.8 L830.0,311.7 L840.0,311.6 L850.0,311.5 L860.0,311.4 L870.0,311.3 L880.0,311.2 L890.0,311.1 L900.0,311.0 L910.0,310.9 L920.0,310.8 L930.0,310.7 L940.0,310.6 L950.0,310.5 L960.0,310.4 L970.0,310.3 L980.0,310.2 L990.0,310.1 L1000.0,310.0" stroke="#404040" stroke-width="18"/>
  <path d="M100.0,179.5 L110.0,179.5 L120.0,179.5 L130.0,179.6 L140.0,179.6 L150.0,179.6 L160.0,179.6 L170.0,179.7 L180.0,179.7 L190.0,179.7 L200.0,179.7 L210.0,179.8 L220.0,179.8 L230.0,179.8 L240.0,179.8 L250.0,179.9 L260.0,179.9 L270.0,179.9 L280.0,179.9 L290.0,179.9 L300.0,180.0 L310.0,180.0 L320.0,180.2 L330.0,180.4 L340.0,180.6 L350.0,180.8 L360.0,181.0 L370.0,181.3 L380.0,181.5 L390.0,181.7 L400.0,181.9 L410.0,182.1 L420.0,182.3 L430.0,182.6 L440.0,182.8 L450.0,183.0 L460.0,183.2 L470.0,183.3 L480.0,183.5 L490.0,183.7 L500.0,183.8 L510.0,184.0 L520.0,184.2 L530.0,184.3 L540.0,184.5 L550.0,184.5 L560.0,184.5 L570.0,184.5 L580.0,184.5 L590.0,184.5 L600.0,184.5 L610.0,184.5 L620.0,184.5 L630.0,184.5 L640.0,184.5 L650.0,184.5 L660.0,184.3 L670.0,184.1 L680.0,184.0 L690.0,183.8 L700.0,183.6 L710.0,183.4 L720.0,183.2 L730.0,183.0 L740.0,182.9 L750.0,182.7 L760.0,182.5 L770.0,182.3 L780.0,182.1 L790.0,181.8 L800.0,181.6 L810.0,181.5 L820.0,181.6 L830.0,181.7 L840.0,181.8 L850.0,181.8 L860.0,181.9 L870.0,182.0 L880.0,182.1 L890.0,182.2 L900.0,182.2 L910.0,182.3 L920.0,182.4 L930.0,182.5 L940.0,182.5 L950.0,182.6 L960.0,182.7 L970.0,182.8 L980.0,182.8 L990.0,182.9 L1000.0,183.0 M100.0,316.5 L110.0,316.4 L120.0,316.3 L130.0,316.1 L140.0,316.0 L150.0,315.9 L160.0,315.8 L170.0,315.7 L180.0,315.6 L190.0,315.4 L200.0,315.3 L210.0,315.2 L220.0,315.1 L230.0,315.0 L240.0,314.8 L250.0,314.7 L260.0,314.6 L270.0,314.5 L280.0,314.4 L290.0,314.3 L300.0,314.1 L310.0,314.0 L320.0,313.9 L330.0,313.7 L340.0,313.5 L350.0,313.3 L360.0,313.1 L370.0,312.9 L380.0,312.8 L390.0,312.6 L400.0,312.4 L410.0,312.2 L420.0,312.0 L430.0,311.9 L440.0,311.7 L450.0,311.5 L460.0,311.3 L470.0,311.2 L480.0,311.0 L490.0,310.8 L500.0,310.7 L510.0,310.5 L520.0,310.3 L530.0,310.2 L540.0,310.0 L550.0,310.0 L560.0,310.0 L570.0,310.0 L580.0,310.0 L590.0,310.0 L600.0,310.0 L610.0,310.0 L620.0,310.0 L630.0,310.0 L640.0,310.0 L650.0,310.0 L660.0,310.1 L670.0,310.2 L680.0,310.3 L690.0,310.4 L700.0,310.5 L710.0,310.5 L720.0,310.6 L730.0,310.7 L740.0,310.8 L750.0,310.9 L760.0,311.0 L770.0,311.2 L780.0,311.4 L790.0,311.7 L800.0,311.9 L810.0,311.9 L820.0,311.8 L830.0,311.7 L840.0,311.6 L850.0,311.5 L860.0,311.4 L870.0,311.3 L880.0,311.2 L890.0,311.1 L900.0,311.0 L910.0,310.9 L920.0,310.8 L930.0,310.7 L940.0,310.6 L950.0,310.5 L960.0,310.4 L970.0,310.3 L980.0,310.2 L990.0,310.1 L1000.0,310.0" stroke="#7c7c7c" stroke-width="14.5"/>
  <path d="M100.0,179.5 L110.0,179.5 L120.0,179.5 L130.0,179.6 L140.0,179.6 L150.0,179.6 L160.0,179.6 L170.0,179.7 L180.0,179.7 L190.0,179.7 L200.0,179.7 L210.0,179.8 L220.0,179.8 L230.0,179.8 L240.0,179.8 L250.0,179.9 L260.0,179.9 L270.0,179.9 L280.0,179.9 L290.0,179.9 L300.0,180.0 L310.0,180.0 L320.0,180.2 L330.0,180.4 L340.0,180.6 L350.0,180.8 L360.0,181.0 L370.0,181.3 L380.0,181.5 L390.0,181.7 L400.0,181.9 L410.0,182.1 L420.0,182.3 L430.0,182.6 L440.0,182.8 L450.0,183.0 L460.0,183.2 L470.0,183.3 L480.0,183.5 L490.0,183.7 L500.0,183.8 L510.0,184.0 L520.0,184.2 L530.0,184.3 L540.0,184.5 L550.0,184.5 L560.0,184.5 L570.0,184.5 L580.0,184.5 L590.0,184.5 L600.0,184.5 L610.0,184.5 L620.0,184.5 L630.0,184.5 L640.0,184.5 L650.0,184.5 L660.0,184.3 L670.0,184.1 L680.0,184.0 L690.0,183.8 L700.0,183.6 L710.0,183.4 L720.0,183.2 L730.0,183.0 L740.0,182.9 L750.0,182.7 L760.0,182.5 L770.0,182.3 L780.0,182.1 L790.0,181.8 L800.0,181.6 L810.0,181.5 L820.0,181.6 L830.0,181.7 L840.0,181.8 L850.0,181.8 L860.0,181.9 L870.0,182.0 L880.0,182.1 L890.0,182.2 L900.0,182.2 L910.0,182.3 L920.0,182.4 L930.0,182.5 L940.0,182.5 L950.0,182.6 L960.0,182.7 L970.0,182.8 L980.0,182.8 L990.0,182.9 L1000.0,183.0 M100.0,316.5 L110.0,316.4 L120.0,316.3 L130.0,316.1 L140.0,316.0 L150.0,315.9 L160.0,315.8 L170.0,315.7 L180.0,315.6 L190.0,315.4 L200.0,315.3 L210.0,315.2 L220.0,315.1 L230.0,315.0 L240.0,314.8 L250.0,314.7 L260.0,314.6 L270.0,314.5 L280.0,314.4 L290.0,314.3 L300.0,314.1 L310.0,314.0 L320.0,313.9 L330.0,313.7 L340.0,313.5 L350.0,313.3 L360.0,313.1 L370.0,312.9 L380.0,312.8 L390.0,312.6 L400.0,312.4 L410.0,312.2 L420.0,312.0 L430.0,311.9 L440.0,311.7 L450.0,311.5 L460.0,311.3 L470.0,311.2 L480.0,311.0 L490.0,310.8 L500.0,310.7 L510.0,310.5 L520.0,310.3 L530.0,310.2 L540.0,310.0 L550.0,310.0 L560.0,310.0 L570.0,310.0 L580.0,310.0 L590.0,310.0 L600.0,310.0 L610.0,310.0 L620.0,310.0 L630.0,310.0 L640.0,310.0 L650.0,310.0 L660.0,310.1 L670.0,310.2 L680.0,310.3 L690.0,310.4 L700.0,310.5 L710.0,310.5 L720.0,310.6 L730.0,310.7 L740.0,310.8 L750.0,310.9 L760.0,311.0 L770.0,311.2 L780.0,311.4 L790.0,311.7 L800.0,311.9 L810.0,311.9 L820.0,311.8 L830.0,311.7 L840.0,311.6 L850.0,311.5 L860.0,311.4 L870.0,311.3 L880.0,311.2 L890.0,311.1 L900.0,311.0 L910.0,310.9 L920.0,310.8 L930.0,310.7 L940.0,310.6 L950.0,310.5 L960.0,310.4 L970.0,310.3 L980.0,310.2 L990.0,310.1 L1000.0,310.0" stroke="#acacac" stroke-width="10"/>
  <path d="M100.0,179.5 L110.0,179.5 L120.0,179.5 L130.0,179.6 L140.0,179.6 L150.0,179.6 L160.0,179.6 L170.0,179.7 L180.0,179.7 L190.0,179.7 L200.0,179.7 L210.0,179.8 L220.0,179.8 L230.0,179.8 L240.0,179.8 L250.0,179.9 L260.0,179.9 L270.0,179.9 L280.0,179.9 L290.0,179.9 L300.0,180.0 L310.0,180.0 L320.0,180.2 L330.0,180.4 L340.0,180.6 L350.0,180.8 L360.0,181.0 L370.0,181.3 L380.0,181.5 L390.0,181.7 L400.0,181.9 L410.0,182.1 L420.0,182.3 L430.0,182.6 L440.0,182.8 L450.0,183.0 L460.0,183.2 L470.0,183.3 L480.0,183.5 L490.0,183.7 L500.0,183.8 L510.0,184.0 L520.0,184.2 L530.0,184.3 L540.0,184.5 L550.0,184.5 L560.0,184.5 L570.0,184.5 L580.0,184.5 L590.0,184.5 L600.0,184.5 L610.0,184.5 L620.0,184.5 L630.0,184.5 L640.0,184.5 L650.0,184.5 L660.0,184.3 L670.0,184.1 L680.0,184.0 L690.0,183.8 L700.0,183.6 L710.0,183.4 L720.0,183.2 L730.0,183.0 L740.0,182.9 L750.0,182.7 L760.0,182.5 L770.0,182.3 L780.0,182.1 L790.0,181.8 L800.0,181.6 L810.0,181.5 L820.0,181.6 L830.0,181.7 L840.0,181.8 L850.0,181.8 L860.0,181.9 L870.0,182.0 L880.0,182.1 L890.0,182.2 L900.0,182.2 L910.0,182.3 L920.0,182.4 L930.0,182.5 L940.0,182.5 L950.0,182.6 L960.0,182.7 L970.0,182.8 L980.0,182.8 L990.0,182.9 L1000.0,183.0 M100.0,316.5 L110.0,316.4 L120.0,316.3 L130.0,316.1 L140.0,316.0 L150.0,315.9 L160.0,315.8 L170.0,315.7 L180.0,315.6 L190.0,315.4 L200.0,315.3 L210.0,315.2 L220.0,315.1 L230.0,315.0 L240.0,314.8 L250.0,314.7 L260.0,314.6 L270.0,314.5 L280.0,314.4 L290.0,314.3 L300.0,314.1 L310.0,314.0 L320.0,313.9 L330.0,313.7 L340.0,313.5 L350.0,313.3 L360.0,313.1 L370.0,312.9 L380.0,312.8 L390.0,312.6 L400.0,312.4 L410.0,312.2 L420.0,312.0 L430.0,311.9 L440.0,311.7 L450.0,311.5 L460.0,311.3 L470.0,311.2 L480.0,311.0 L490.0,310.8 L500.0,310.7 L510.0,310.5 L520.0,310.3 L530.0,310.2 L540.0,310.0 L550.0,310.0 L560.0,310.0 L570.0,310.0 L580.0,310.0 L590.0,310.0 L600.0,310.0 L610.0,310.0 L620.0,310.0 L630.0,310.0 L640.0,310.0 L650.0,310.0 L660.0,310.1 L670.0,310.2 L680.0,310.3 L690.0,310.4 L700.0,310.5 L710.0,310.5 L720.0,310.6 L730.0,310.7 L740.0,310.8 L750.0,310.9 L760.0,311.0 L770.0,311.2 L780.0,311.4 L790.0,311.7 L800.0,311.9 L810.0,311.9 L820.0,311.8 L830.0,311.7 L840.0,311.6 L850.0,311.5 L860.0,311.4 L870.0,311.3 L880.0,311.2 L890.0,311.1 L900.0,311.0 L910.0,310.9 L920.0,310.8 L930.0,310.7 L940.0,310.6 L950.0,310.5 L960.0,310.4 L970.0,310.3 L980.0,310.2 L990.0,310.1 L1000.0,310.0" stroke="#cecece" stroke-width="5"/>
  <ellipse cx="309" cy="249.5" rx="24" ry="10" fill="#fff" opacity=".22"/>
  <ellipse cx="805" cy="248.5" rx="24" ry="10" fill="#fff" opacity=".22"/>
 </g>
 <path d="M148,122 H159 L148,133 Z" fill="#a8a8a8"/>
 <rect x="309" y="122" width="493" height="33" fill="url(#mb)" opacity=".96"/>
 <path d="M309.5,155 V122 M309,154.5 H802" stroke="#a8a8a8" stroke-width="1.1" fill="none"/>
 <rect x="309" y="343" width="493" height="35" fill="url(#mb2)" opacity=".96"/>
 <path d="M309.5,343 V378" stroke="#c8c8c8" stroke-width="1.2"/><path d="M309,343 H802" stroke="#808080" stroke-width="1"/><path d="M309,376.6 H802" stroke="#fafafa" stroke-width="2.8"/>
 <polygon points="381,248 429,225 530,206 580,206 680.5,224.5 730,248 680.5,272.5 580,290 530,290 429,272.5" fill="url(#mo)" stroke="#a4a4a4" stroke-width="1.1"/>
 <polygon points="459,248 530,230 580,230 652.5,248 580,267.5 530,267.5" fill="url(#mi)" stroke="#dcdcdc" stroke-width="1.1"/>
 <path d="M230.5,122 V379 M312.5,122 V379 M394.5,122 V379 M476.5,122 V379 M558.5,122 V379 M641.5,122 V379 M723.5,122 V379 M805.5,122 V379 M887.5,122 V379 M148,154.5 H969 M148,218.5 H969 M148,250.5 H969 M148,282.5 H969 M148,346.5 H969" stroke="#b4b4b4" stroke-width="1" stroke-dasharray="1 1" fill="none" shape-rendering="crispEdges" opacity=".7"/>
 <path d="M148.5,248 V253 M164.5,248 V253 M181.5,248 V253 M197.5,248 V253 M214.5,248 V253 M230.5,248 V253 M247.5,248 V253 M263.5,248 V253 M279.5,248 V253 M296.5,248 V253 M312.5,248 V253 M329.5,248 V253 M345.5,248 V253 M361.5,248 V253 M378.5,248 V253 M394.5,248 V253 M411.5,248 V253 M427.5,248 V253 M444.5,248 V253 M460.5,248 V253 M476.5,248 V253 M493.5,248 V253 M509.5,248 V253 M526.5,248 V253 M542.5,248 V253 M559.5,248 V253 M575.5,248 V253 M591.5,248 V253 M608.5,248 V253 M624.5,248 V253 M641.5,248 V253 M657.5,248 V253 M673.5,248 V253 M690.5,248 V253 M706.5,248 V253 M723.5,248 V253 M739.5,248 V253 M756.5,248 V253 M772.5,248 V253 M788.5,248 V253 M805.5,248 V253 M821.5,248 V253 M838.5,248 V253 M854.5,248 V253 M870.5,248 V253 M887.5,248 V253 M903.5,248 V253 M920.5,248 V253 M936.5,248 V253 M953.5,248 V253 M969.5,248 V253 M556,138.5 H562 M556,170.5 H562 M556,202.5 H562 M556,234.5 H562 M556,266.5 H562 M556,298.5 H562 M556,330.5 H562 M556,362.5 H562" stroke="#b4b4b4" stroke-width="1" fill="none" shape-rendering="crispEdges" opacity=".8"/>
</g>
<rect x="425.5" y="162.5" width="57.5" height="34" rx="3" fill="url(#lb)" stroke="#b0b0b0" stroke-width="1"/><rect x="622.5" y="162.5" width="57.5" height="34" rx="3" fill="url(#lb)" stroke="#b0b0b0" stroke-width="1"/><rect x="425.5" y="289.5" width="57.5" height="34" rx="3" fill="url(#lb)" stroke="#b0b0b0" stroke-width="1"/><rect x="622.5" y="289.5" width="57.5" height="34" rx="3" fill="url(#lb)" stroke="#b0b0b0" stroke-width="1"/>
<path d="M496,180 L508,185 L496,190 Z M619,180 L608,185 L619,190 Z M496,305 L508,310 L496,315 Z M619,305 L608,310 L619,315 Z" fill="#fff" opacity=".92"/>
<rect x="845.5" y="135.5" width="115" height="37" fill="#000" stroke="#9a9a9a" stroke-width="1"/>
<rect x="916" y="162" width="40" height="5" fill="#2fc43a"/>
<path d="M944,147.5 L949,143.5 L954,147.5 M944,151.5 L949,147.5 L954,151.5" fill="none" stroke="#8a8a8a" stroke-width="1.2"/>
<path d="M972,349 L985,342.5 V356 Z" fill="#22cc22"/>
</svg>
<div class="a" style="left:132px;top:427px;width:446px;height:267px;border:1px solid #8a8a8a;border-radius:0 5px 5px 5px;background:#0c0c0c"></div>
<div class="a" style="left:132px;top:397px;width:121px;height:31px;border:1px solid #8a8a8a;border-bottom:none;border-radius:5px 5px 0 0;background:#0e0e0e"></div>
<svg class="a" style="left:228px;top:400px" width="24" height="24"><circle cx="12" cy="12" r="10" fill="#0c0c0c" stroke="#7a7a7a" stroke-width="1.2"/><path d="M-3.5,-5 L5.5,0 L-3.5,5 Z" transform="translate(12,12)" fill="#8a8a8a"/></svg>
<div class="a" style="left:135.5px;top:430px;width:440px;height:231.5px;border-radius:4px;background:#fff"></div>
<div class="a" style="left:135.5px;top:430px;width:440px;height:37px;border-radius:4px 4px 0 0;background:linear-gradient(#f6f6f6,#cdcdcd)"></div>
<div class="btn" style="left:139px;top:435.5px;width:24px;height:24.5px;border-radius:3px"></div>
<div class="btn" style="left:217.5px;top:435.5px;width:24px;height:24.5px;border-radius:3px"></div>
<svg class="a" style="left:139px;top:435.5px" width="24" height="24"><path d="M14.5,8.5 L9.5,12 L14.5,15.5" fill="none" stroke="#111" stroke-width="2.2"/></svg>
<svg class="a" style="left:217.5px;top:435.5px" width="24" height="24"><path d="M9.5,8.5 L14.5,12 L9.5,15.5" fill="none" stroke="#111" stroke-width="2.2"/></svg>
<div class="btn" style="left:405.5px;top:432px;width:48px;height:18.5px;border-radius:4px;border:1px solid #8a8a8a;background:linear-gradient(#f0f0f0,#d8d8d8)"></div>
<div class="badge" style="left:224.5px;top:472.5px"></div>
<div class="a" style="left:141px;top:503.5px;width:210px;height:53px;border:1px solid #e0e0e0;border-radius:2px"></div>
<div class="grp" style="top:472px;height:91px"><div class="gh"></div><div class="a" style="left:0;top:68px;width:208px;height:1px;background:#e4e4e4"></div><div class="a" style="left:1px;top:70.5px;width:199px;height:16.5px;border:1px solid #3a8cb0;border-radius:4px"></div></div>
<div class="grp" style="top:566px;height:89px"><div class="gh"></div><div class="a" style="left:0;top:68px;width:208px;height:1px;background:#e4e4e4"></div></div>
<div class="btn" style="left:140px;top:663.5px;width:60px;height:26px;border:none;border-bottom:2px solid #8a8a8a"></div>
<div class="btn" style="left:205px;top:663.5px;width:55px;height:26px;border:none;border-bottom:2px solid #8a8a8a"></div>
<div class="a" style="left:578.5px;top:427px;width:445.5px;height:268px;border:1px solid #8a8a8a;border-radius:5px 0 5px 5px;background:#0c0c0c"></div>
<div class="a" style="left:904px;top:397px;width:120px;height:31px;border:1px solid #8a8a8a;border-bottom:none;border-radius:5px 5px 0 0;background:#0e0e0e"></div>
<svg class="a" style="left:904px;top:400px" width="24" height="24"><circle cx="12" cy="12" r="10" fill="#0c0c0c" stroke="#7a7a7a" stroke-width="1.2"/><path d="M3.5,-5 L-5.5,0 L3.5,5 Z" transform="translate(12,12)" fill="#8a8a8a"/></svg>
<div class="a" style="left:253px;top:396px;width:651px;height:1px;background:#808080"></div>
<svg class="a" style="left:562px;top:397px" width="32" height="32"><circle cx="15.5" cy="15" r="13" fill="#0c0c0c" stroke="#7a7a7a" stroke-width="1.2"/><path d="M9,13 L15.5,19 L22,13" fill="none" stroke="#7a7a7a" stroke-width="1.3"/></svg>
<svg class="a" style="left:605px;top:403px" width="15" height="16"><rect x="3.5" y="1" width="7.5" height="8.5" rx="1" fill="#8e8e8e"/><rect x="5" y="1" width="2.5" height="8.5" fill="#a8a8a8"/><path d="M1.5,10 H13.5" stroke="#8a8a8a" stroke-width="1.3"/><path d="M7.5,10 V15" stroke="#8a8a8a" stroke-width="1.2"/></svg>
<div class="a" style="left:583.5px;top:431px;width:435.5px;height:221.5px;background:#fff;border-top:1px solid #999"></div>
<div class="a" style="left:584px;top:432.5px;width:432px;height:25px;background:linear-gradient(#f2f2f2,#c6c6c6)"></div>
<div class="a" style="left:779.5px;top:433.5px;width:1px;height:23px;background:#aaa"></div><div class="a" style="left:780.5px;top:433.5px;width:1px;height:23px;background:#fafafa"></div>
<div class="a" style="left:875px;top:433.5px;width:1px;height:23px;background:#aaa"></div><div class="a" style="left:876px;top:433.5px;width:1px;height:23px;background:#fafafa"></div>
<div class="a" style="left:969.5px;top:433.5px;width:1px;height:23px;background:#aaa"></div><div class="a" style="left:970.5px;top:433.5px;width:1px;height:23px;background:#fafafa"></div>
<div class="row" style="top:458.5px;left:584.5px;width:433px;height:23px;border:1px solid #3a9cba;border-radius:4px;background:#dce8fb"></div>
<div class="badge" style="left:752px;top:462.5px"></div>
<div class="badge" style="left:752px;top:486.5px"></div>
<div class="row" style="top:507px"></div>
<div class="badge" style="left:752px;top:510.5px"></div>
<div class="badge" style="left:752px;top:534.5px"></div>
<div class="row" style="top:555px"></div>
<div class="badge" style="left:752px;top:558.5px"></div>
<div class="btn" style="left:584px;top:659px;width:29px;height:26px;border:none;border-bottom:2px solid #8a8a8a;border-radius:3px"></div>
<svg class="a" style="left:584px;top:659px" width="29" height="26"><path d="M11,6.5 Q14,10 18,17.5 M19.8,4.8 Q13,11 8,19.5" fill="none" stroke="#e01818" stroke-width="2.8" stroke-linecap="round"/></svg>
<div class="btn" style="left:618px;top:659px;width:60px;height:26px;border:none;border-bottom:2px solid #8a8a8a"></div>
<div class="a" style="left:683px;top:659px;width:55px;height:26px;border-radius:4px;background:radial-gradient(ellipse at 50% 100%,#7ccaf2 0,#6aa8d4 55%,#7fa9cc 100%);border-top:1px solid #a8c4dc"></div>
<div class="a" style="left:866px;top:662.5px;width:17.5px;height:17px;background:#fff;border:1px solid #9a9a9a;border-radius:2px"></div>
<svg class="a" style="left:866px;top:662.5px" width="18" height="17"><path d="M4,9 L7.5,13 L14,4" fill="none" stroke="#1f8a2a" stroke-width="2.2"/></svg>
<div class="a" style="left:974px;top:659px;width:41px;height:26px;border-radius:4px;background:#cfcfcf;border:1px solid #eee;border-bottom:2px solid #8a8a8a"></div><div class="a" style="left:977.5px;top:663px;width:34px;height:17px;background:#3a3a3a"></div><div class="a" style="left:979px;top:664.3px;width:9px;height:3.6px;background:#d8d8d8"></div><div class="a" style="left:990px;top:664.3px;width:9px;height:3.6px;background:#d8d8d8"></div><div class="a" style="left:1001px;top:664.3px;width:9px;height:3.6px;background:#d8d8d8"></div><div class="a" style="left:979px;top:669.5px;width:9px;height:3.6px;background:#d8d8d8"></div><div class="a" style="left:990px;top:669.5px;width:9px;height:3.6px;background:#d8d8d8"></div><div class="a" style="left:1001px;top:669.5px;width:9px;height:3.6px;background:#d8d8d8"></div><div class="a" style="left:979px;top:674.6999999999999px;width:9px;height:3.6px;background:#d8d8d8"></div><div class="a" style="left:990px;top:674.6999999999999px;width:9px;height:3.6px;background:#d8d8d8"></div><div class="a" style="left:1001px;top:674.6999999999999px;width:9px;height:3.6px;background:#d8d8d8"></div>
<div class="a" style="left:0;top:696px;width:1024px;height:72px;background:linear-gradient(#1c1c1c 0,#0a0a0a 35%,#000 100%)"></div>
<div class="bb" style="left:34.5px;width:219.5px"></div>
<div class="bb" style="left:608px;width:99.5px"></div>
<div class="bb" style="left:709px;width:100px"></div>
<div class="bb" style="left:811px;width:100.5px"></div>
<svg class="a" style="left:4px;top:698px" width="30" height="68"><path d="M28,2.5 H12 Q4,8 2.5,30 V32.5 H28 Z M28,35.5 H2.5 V37 Q4,58 12,65.5 H28 Z" fill="#141414" stroke="#4a4a4a" stroke-width="1"/><path d="M20,10.5 L9.5,17.5 L20,24.5 Z" fill="none" stroke="#3a3a3a" stroke-width="1.3"/><path d="M7,44 h5 v3 h-5 z M14,44 h5 v3 h-5 z M21,44 h5 v3 h-5 z M7,50 h5 v3 h-5 z M14,50 h5 v3 h-5 z" fill="#333"/></svg>
<svg class="a" style="left:255px;top:698px" width="30" height="68"><path d="M2,2.5 H18 Q26,8 27.5,30 V32.5 H2 Z M2,35.5 H27.5 V37 Q26,58 18,65.5 H2 Z" fill="#141414" stroke="#4a4a4a" stroke-width="1"/><path d="M9,10.5 L19.5,17.5 L9,24.5 Z" fill="none" stroke="#3a3a3a" stroke-width="1.3"/><g transform="translate(13.5,50.5)"><circle r="6.2" fill="none" stroke="#6a6a6a" stroke-width="3.4" stroke-dasharray="2.6 2.27"/><circle r="4.6" fill="none" stroke="#6a6a6a" stroke-width="2.6"/></g></svg>
<div class="a" style="left:40.5px;top:734px;width:23px;height:23px;border-radius:50%;background:radial-gradient(circle at 50% 35%,#e4e4e4,#b4b4b4)"></div>
<div class="a" style="left:148.8px;top:734px;width:23px;height:23px;border-radius:50%;background:radial-gradient(circle at 50% 35%,#4ee05a,#22b82e)"></div>
<svg class="a" style="left:233px;top:743px" width="20" height="20"><path d="M19.5,1 V15 Q19.5,19.5 15,19.5 H1 Z" fill="#5a5a5a"/></svg>
<svg class="a" style="left:910.75px;top:698px" width="56" height="58"><defs><linearGradient id="cg938" x1="0" y1="0" x2="0" y2="1"><stop offset="0" stop-color="#222"/><stop offset="0.5" stop-color="#161616"/><stop offset="0.5" stop-color="#060606"/><stop offset="1" stop-color="#0a0a0a"/></linearGradient></defs><circle cx="28" cy="28" r="26" fill="url(#cg938)" stroke="#666" stroke-width="1.1"/><path d="M19.5,13 L28,4.5 L36.5,13 Z" fill="#9a9a9a"/></svg>
<svg class="a" style="left:965.75px;top:698px" width="56" height="58"><defs><linearGradient id="cg993" x1="0" y1="0" x2="0" y2="1"><stop offset="0" stop-color="#222"/><stop offset="0.5" stop-color="#161616"/><stop offset="0.5" stop-color="#060606"/><stop offset="1" stop-color="#0a0a0a"/></linearGradient></defs><circle cx="28" cy="28" r="26" fill="url(#cg993)" stroke="#666" stroke-width="1.1"/><path d="M19.5,13 L28,4.5 L36.5,13 Z" fill="#9a9a9a"/></svg>
<div class="a" style="left:421px;top:355px;width:181px;height:57px;background:#fff"></div>
<span class="t" style="left:126.9px;top:66.0px;font-size:15px;color:#fff;transform-origin:0 0;transform:rotate(90deg);letter-spacing:-1.29px;">Eye Meas</span>
<span class="t" style="left:126.2px;top:168.7px;font-size:15px;color:#8a8a8a;transform-origin:0 0;transform:rotate(90deg);letter-spacing:-0.74px;">Mask Test</span>
<span class="t" style="left:23.5px;top:90.2px;font-size:11.5px;color:#111;font-weight:bold;">%</span>
<span class="t" style="left:23.5px;top:132.5px;font-size:11px;color:#fff;letter-spacing:-0.08px;">Crossing %</span>
<span class="t" style="left:15.7px;top:222.5px;font-size:11px;color:#fff;letter-spacing:-0.26px;">Signal to Noise</span>
<span class="t" style="left:39.5px;top:236.5px;font-size:11px;color:#fff;letter-spacing:-0.42px;">Ratio</span>
<span class="t" style="left:25.5px;top:312.5px;font-size:11px;color:#fff;letter-spacing:-0.13px;">Duty Cycle</span>
<span class="t" style="left:29.5px;top:326.5px;font-size:11px;color:#fff;letter-spacing:-0.16px;">Distortion</span>
<span class="t" style="left:33.0px;top:402.5px;font-size:11px;color:#fff;letter-spacing:-0.23px;">Bit Rate</span>
<span class="t" style="left:17.5px;top:492.5px;font-size:11px;color:#fff;letter-spacing:-0.24px;">Eye Amplitude</span>
<span class="t" style="left:36.0px;top:582.5px;font-size:11px;color:#fff;letter-spacing:-0.47px;">Δ Time</span>
<span class="t" style="left:23.4px;top:662.0px;font-size:13px;color:#222;letter-spacing:-0.41px;">More (3/4)</span>
<span class="t" style="left:27.5px;top:21.0px;font-size:15px;color:#cfe6f6;letter-spacing:0.16px;font-weight:bold;text-shadow:0 1px 1px #0a2a6a;">Eye/Mask</span>
<span class="t" style="left:157.0px;top:15.0px;font-size:14px;color:#9a9a9a;letter-spacing:-0.84px;font-weight:bold;">KEYSIGHT</span>
<span class="t" style="left:237.0px;top:14.0px;font-size:17px;color:#fff;letter-spacing:-1.14px;">File</span>
<span class="t" style="left:283.0px;top:14.0px;font-size:17px;color:#fff;letter-spacing:-0.98px;">Setup</span>
<span class="t" style="left:345.5px;top:14.0px;font-size:17px;color:#fff;letter-spacing:-1.11px;">Measure</span>
<span class="t" style="left:427.0px;top:14.0px;font-size:17px;color:#fff;letter-spacing:-0.67px;">Tools</span>
<span class="t" style="left:486.0px;top:14.0px;font-size:17px;color:#fff;letter-spacing:-1.25px;">Apps</span>
<span class="t" style="left:543.0px;top:14.0px;font-size:17px;color:#fff;letter-spacing:-1.16px;">Help</span>
<span class="t" style="left:718.0px;top:10.8px;font-size:12.5px;color:#222;letter-spacing:-1.24px;">Auto</span>
<span class="t" style="left:716.5px;top:21.8px;font-size:12.5px;color:#222;letter-spacing:-1.57px;">Scale</span>
<span class="t" style="left:778.5px;top:14.8px;font-size:13.5px;color:#222;letter-spacing:-2.13px;">Run</span>
<span class="t" style="left:824.0px;top:14.8px;font-size:13.5px;color:#222;letter-spacing:-1.11px;">Single</span>
<span class="t" style="left:877.5px;top:14.8px;font-size:13.5px;color:#222;letter-spacing:-1.44px;">Clear</span>
<span class="t" style="left:994.0px;top:14.0px;font-size:17px;color:#fff;font-weight:bold;">X</span>
<span class="t" style="left:148.5px;top:53.8px;font-size:14.5px;color:#fff;letter-spacing:-0.43px;">Waveform</span>
<span class="t" style="left:158.5px;top:124.0px;font-size:12px;color:#7a7a7a;letter-spacing:0.14px;font-style:italic;">24.03103 ns</span>
<span class="t" style="left:432.5px;top:165.0px;font-size:14px;color:#fff;letter-spacing:-0.19px;">1 Level</span>
<span class="t" style="left:433.0px;top:181.8px;font-size:12.5px;color:#34d034;letter-spacing:-0.22px;font-style:italic;">395 mV</span>
<span class="t" style="left:431.5px;top:292.0px;font-size:14px;color:#fff;letter-spacing:0.06px;">0 Level</span>
<span class="t" style="left:436.5px;top:309.8px;font-size:12.5px;color:#34d034;letter-spacing:-0.29px;font-style:italic;">91 mV</span>
<span class="t" style="left:629.5px;top:165.0px;font-size:14px;color:#fff;letter-spacing:-0.19px;">1 Level</span>
<span class="t" style="left:630.0px;top:181.8px;font-size:12.5px;color:#34d034;letter-spacing:-0.22px;font-style:italic;">395 mV</span>
<span class="t" style="left:628.5px;top:292.0px;font-size:14px;color:#fff;letter-spacing:0.06px;">0 Level</span>
<span class="t" style="left:633.5px;top:309.8px;font-size:12.5px;color:#34d034;letter-spacing:-0.29px;font-style:italic;">91 mV</span>
<span class="t" style="left:531.5px;top:239.2px;font-size:17.5px;color:#3c68c0;font-weight:bold;font-style:italic;">1</span>
<span class="t" style="left:850.0px;top:141.8px;font-size:12.5px;color:#fff;letter-spacing:-1.0px;">Signals</span>
<span class="t" style="left:850.0px;top:159.0px;font-size:12px;color:#fff;letter-spacing:-0.97px;">Channel 2A</span>
<span class="t" style="left:990.0px;top:342.0px;font-size:14px;color:#22cc22;letter-spacing:-1.62px;">2A</span>
<span class="t" style="left:149.5px;top:405.8px;font-size:14.5px;color:#fff;letter-spacing:-0.44px;">Mask Test</span>
<span class="t" style="left:169.5px;top:441.8px;font-size:14.5px;color:#2424ac;letter-spacing:-0.85px;">Mask 5</span>
<span class="t" style="left:293.8px;top:434.8px;font-size:12.5px;color:#222;letter-spacing:-0.65px;">Mask:</span>
<span class="t" style="left:333.0px;top:435.0px;font-size:12px;color:#2424ac;letter-spacing:-0.09px;">100GE-SR4</span>
<span class="t" style="left:253.8px;top:452.8px;font-size:12.5px;color:#222;letter-spacing:-0.39px;">Symbol Rate:</span>
<span class="t" style="left:332.5px;top:453.0px;font-size:12px;color:#2424ac;letter-spacing:-0.06px;">25.781 GBd</span>
<span class="t" style="left:410.0px;top:435.5px;font-size:11px;color:#222;letter-spacing:-1.09px;">Change...</span>
<span class="t" style="left:176.0px;top:473.8px;font-size:12.5px;color:#222;letter-spacing:-0.52px;">Source:</span>
<span class="t" style="left:227.5px;top:474.2px;font-size:11.5px;color:#0c4a14;letter-spacing:-0.7px;font-weight:bold;">2A</span>
<span class="t" style="left:144.0px;top:489.8px;font-size:12.5px;color:#222;letter-spacing:-0.37px;">Align Method:</span>
<span class="t" style="left:224.5px;top:490.0px;font-size:12px;color:#2424ac;letter-spacing:-0.05px;">Eye Cross Mean</span>
<span class="t" style="left:162.5px;top:507.8px;font-size:12.5px;color:#222;letter-spacing:-0.41px;">Waveforms:</span>
<span class="t" style="left:230.5px;top:508.0px;font-size:12px;color:#2424ac;letter-spacing:-0.14px;">188 wfm</span>
<span class="t" style="left:160.5px;top:524.8px;font-size:12.5px;color:#222;letter-spacing:-0.36px;">Samples/UI:</span>
<span class="t" style="left:230.5px;top:525.0px;font-size:12px;color:#2424ac;letter-spacing:-0.14px;">232.04 ksa</span>
<span class="t" style="left:186.0px;top:540.8px;font-size:12.5px;color:#222;letter-spacing:-0.45px;">Margin:</span>
<span class="t" style="left:230.5px;top:541.0px;font-size:12px;color:#2424ac;letter-spacing:-0.17px;">52.3 %</span>
<span class="t" style="left:397.0px;top:475.0px;font-size:12px;color:#222;letter-spacing:-0.04px;font-style:italic;">Standard Mask Violations</span>
<span class="t" style="left:407.0px;top:493.8px;font-size:12.5px;color:#222;letter-spacing:-0.38px;">Region 1:</span>
<span class="t" style="left:462.0px;top:494.0px;font-size:12px;color:#2424ac;letter-spacing:-0.14px;">0 hits</span>
<span class="t" style="left:407.0px;top:509.8px;font-size:12.5px;color:#222;letter-spacing:-0.38px;">Region 2:</span>
<span class="t" style="left:462.0px;top:510.0px;font-size:12px;color:#2424ac;letter-spacing:-0.14px;">0 hits</span>
<span class="t" style="left:407.0px;top:526.8px;font-size:12.5px;color:#222;letter-spacing:-0.38px;">Region 3:</span>
<span class="t" style="left:462.0px;top:527.0px;font-size:12px;color:#2424ac;letter-spacing:-0.14px;">0 hits</span>
<span class="t" style="left:427.5px;top:545.8px;font-size:12.5px;color:#222;letter-spacing:0.02px;">Total:</span>
<span class="t" style="left:462.0px;top:546.0px;font-size:12px;color:#2424ac;letter-spacing:-0.14px;">0 hits</span>
<span class="t" style="left:402.5px;top:568.0px;font-size:12px;color:#222;letter-spacing:-0.02px;font-style:italic;">Margin Mask Violations</span>
<span class="t" style="left:407.0px;top:587.8px;font-size:12.5px;color:#222;letter-spacing:-0.38px;">Region 1:</span>
<span class="t" style="left:462.0px;top:588.0px;font-size:12px;color:#2424ac;letter-spacing:-0.14px;">0 hits</span>
<span class="t" style="left:407.0px;top:603.8px;font-size:12.5px;color:#222;letter-spacing:-0.38px;">Region 2:</span>
<span class="t" style="left:462.0px;top:604.0px;font-size:12px;color:#2424ac;letter-spacing:-0.14px;">0 hits</span>
<span class="t" style="left:407.0px;top:619.8px;font-size:12.5px;color:#222;letter-spacing:-0.38px;">Region 3:</span>
<span class="t" style="left:462.0px;top:620.0px;font-size:12px;color:#2424ac;letter-spacing:-0.14px;">0 hits</span>
<span class="t" style="left:427.5px;top:638.8px;font-size:12.5px;color:#222;letter-spacing:0.02px;">Total:</span>
<span class="t" style="left:462.0px;top:639.0px;font-size:12px;color:#2424ac;letter-spacing:-0.14px;">0 hits</span>
<span class="t" style="left:143.5px;top:669.0px;font-size:14px;color:#222;letter-spacing:-0.16px;">Details...</span>
<span class="t" style="left:208.5px;top:669.0px;font-size:14px;color:#222;letter-spacing:-0.03px;">Limits...</span>
<span class="t" style="left:954.0px;top:405.8px;font-size:14.5px;color:#fff;letter-spacing:-0.73px;">Results</span>
<span class="t" style="left:588.0px;top:438.0px;font-size:14px;color:#222;letter-spacing:-0.26px;">Measurement</span>
<span class="t" style="left:825.0px;top:438.0px;font-size:14px;color:#222;letter-spacing:-0.11px;">Current</span>
<span class="t" style="left:930.0px;top:438.0px;font-size:14px;color:#222;letter-spacing:-0.34px;">Count</span>
<span class="t" style="left:754.5px;top:464.0px;font-size:13px;color:#0c4a14;letter-spacing:-1.12px;font-weight:bold;">2A</span>
<span class="t" style="left:593.0px;top:463.0px;font-size:14px;color:#222;letter-spacing:-0.23px;">Eye Ampl</span>
<span class="t" style="left:817.0px;top:465.0px;font-size:12px;color:#2222aa;letter-spacing:-0.05px;">304.3 mV</span>
<span class="t" style="left:946.0px;top:465.0px;font-size:12px;color:#2222aa;letter-spacing:0.39px;">28</span>
<span class="t" style="left:754.5px;top:488.0px;font-size:13px;color:#0c4a14;letter-spacing:-1.12px;font-weight:bold;">2A</span>
<span class="t" style="left:593.0px;top:487.0px;font-size:14px;color:#222;letter-spacing:-0.16px;">Fall Time</span>
<span class="t" style="left:822.5px;top:489.0px;font-size:12px;color:#2222aa;letter-spacing:-0.08px;">16.08 ps</span>
<span class="t" style="left:946.0px;top:489.0px;font-size:12px;color:#2222aa;letter-spacing:0.39px;">28</span>
<span class="t" style="left:754.5px;top:512.0px;font-size:13px;color:#0c4a14;letter-spacing:-1.12px;font-weight:bold;">2A</span>
<span class="t" style="left:593.0px;top:511.0px;font-size:14px;color:#222;letter-spacing:-0.28px;">Rise Time</span>
<span class="t" style="left:822.5px;top:513.0px;font-size:12px;color:#2222aa;letter-spacing:-0.08px;">16.43 ps</span>
<span class="t" style="left:946.0px;top:513.0px;font-size:12px;color:#2222aa;letter-spacing:0.39px;">28</span>
<span class="t" style="left:754.5px;top:536.0px;font-size:13px;color:#0c4a14;letter-spacing:-1.12px;font-weight:bold;">2A</span>
<span class="t" style="left:593.0px;top:535.0px;font-size:14px;color:#222;letter-spacing:0.31px;">Jitter[p-p]</span>
<span class="t" style="left:822.5px;top:537.0px;font-size:12px;color:#2222aa;letter-spacing:-0.08px;">7.912 ps</span>
<span class="t" style="left:946.0px;top:537.0px;font-size:12px;color:#2222aa;letter-spacing:0.39px;">28</span>
<span class="t" style="left:754.5px;top:560.0px;font-size:13px;color:#0c4a14;letter-spacing:-1.12px;font-weight:bold;">2A</span>
<span class="t" style="left:593.0px;top:559.0px;font-size:14px;color:#222;letter-spacing:0.25px;">Jitter[rms]</span>
<span class="t" style="left:822.5px;top:561.0px;font-size:12px;color:#2222aa;letter-spacing:-0.08px;">1.258 ps</span>
<span class="t" style="left:946.0px;top:561.0px;font-size:12px;color:#2222aa;letter-spacing:0.39px;">28</span>
<span class="t" style="left:621.0px;top:664.0px;font-size:14px;color:#222;letter-spacing:-0.11px;">Details...</span>
<span class="t" style="left:686.5px;top:664.0px;font-size:14px;color:#1a2a3a;letter-spacing:-0.03px;">Limits...</span>
<span class="t" style="left:890.5px;top:664.0px;font-size:14px;color:#fff;letter-spacing:-0.15px;">Annotations</span>
<span class="t" style="left:46.5px;top:740.5px;font-size:10px;color:#222;letter-spacing:-1.23px;">1A</span>
<span class="t" style="left:154.5px;top:740.5px;font-size:10px;color:#0a3a10;letter-spacing:-0.73px;">2A</span>
<span class="t" style="left:69.7px;top:731.8px;font-size:12.5px;color:#fff;letter-spacing:-0.97px;">500 μW/</span>
<span class="t" style="left:69.7px;top:747.8px;font-size:12.5px;color:#fff;letter-spacing:-1.03px;">1.0000 mW</span>
<span class="t" style="left:177.5px;top:731.8px;font-size:12.5px;color:#fff;letter-spacing:-0.79px;">76.7 mV/</span>
<span class="t" style="left:177.5px;top:747.8px;font-size:12.5px;color:#fff;letter-spacing:-1.0px;">238.05 mV</span>
<span class="t" style="left:245.0px;top:753.8px;font-size:9.5px;color:#111;font-weight:bold;">1</span>
<span class="t" style="left:632.5px;top:704.0px;font-size:13px;color:#e0e0e0;letter-spacing:-1.04px;font-weight:bold;font-style:italic;">Timebase</span>
<span class="t" style="left:637.5px;top:720.8px;font-size:12.5px;color:#fff;letter-spacing:-0.64px;">6.45 ps/</span>
<span class="t" style="left:615.8px;top:735.8px;font-size:12.5px;color:#ccc;letter-spacing:-1.59px;">Pos:</span>
<span class="t" style="left:640.0px;top:735.8px;font-size:12.5px;color:#fff;letter-spacing:-0.88px;">24.03103 ns</span>
<span class="t" style="left:728.8px;top:704.0px;font-size:13px;color:#e0e0e0;letter-spacing:-0.9px;font-weight:bold;font-style:italic;">Acquisition</span>
<span class="t" style="left:720.0px;top:720.8px;font-size:12.5px;color:#ccc;letter-spacing:-0.72px;">Full Pattern:</span>
<span class="t" style="left:783.0px;top:720.8px;font-size:12.5px;color:#5a5a5a;letter-spacing:-0.73px;">Off</span>
<span class="t" style="left:725.5px;top:735.8px;font-size:12.5px;color:#5a5a5a;letter-spacing:-0.71px;">2048 pts/wfm</span>
<span class="t" style="left:823.0px;top:704.0px;font-size:13px;color:#e0e0e0;letter-spacing:-0.77px;font-weight:bold;font-style:italic;">Frame Trigger</span>
<span class="t" style="left:823.0px;top:719.8px;font-size:12.5px;color:#ccc;letter-spacing:-1.41px;">Src:</span>
<span class="t" style="left:844.0px;top:719.8px;font-size:12.5px;color:#fff;letter-spacing:-0.96px;">Front Panel</span>
<span class="t" style="left:839.0px;top:734.8px;font-size:12.5px;color:#fff;letter-spacing:-1.03px;">Standard</span>
<span class="t" style="left:848.5px;top:748.8px;font-size:12.5px;color:#fff;letter-spacing:-1.4px;">4 mV</span>
<span class="t" style="left:926.0px;top:719.0px;font-size:13px;color:#e0e0e0;letter-spacing:-0.78px;font-weight:bold;font-style:italic;">Math</span>
<span class="t" style="left:974.0px;top:719.0px;font-size:13px;color:#e0e0e0;letter-spacing:-0.88px;font-weight:bold;font-style:italic;">Signals</span>
<div><span class="t" style="left:421.0px;top:356.2px;font-size:24.5px;color:#d8342c;transform-origin:0 0;transform:scaleX(1.13);">O</span><span class="t" style="left:444.5px;top:356.2px;font-size:24.5px;color:#2a8cd8;">E</span><span class="t" style="left:463.2px;top:358.0px;font-size:18px;color:#333;transform-origin:0 0;transform:scaleX(2.27);">-</span><span class="t" style="left:478.5px;top:356.2px;font-size:24.5px;color:#222;transform-origin:0 0;transform:scaleX(1.09);letter-spacing:0.94px;">Superlink</span></div>
<span class="t" style="left:421.0px;top:396.5px;font-size:14px;color:#606060;letter-spacing:2.53px;font-family:'Liberation Serif',serif;">www.oe-superlink.com</span>
</body></html>
